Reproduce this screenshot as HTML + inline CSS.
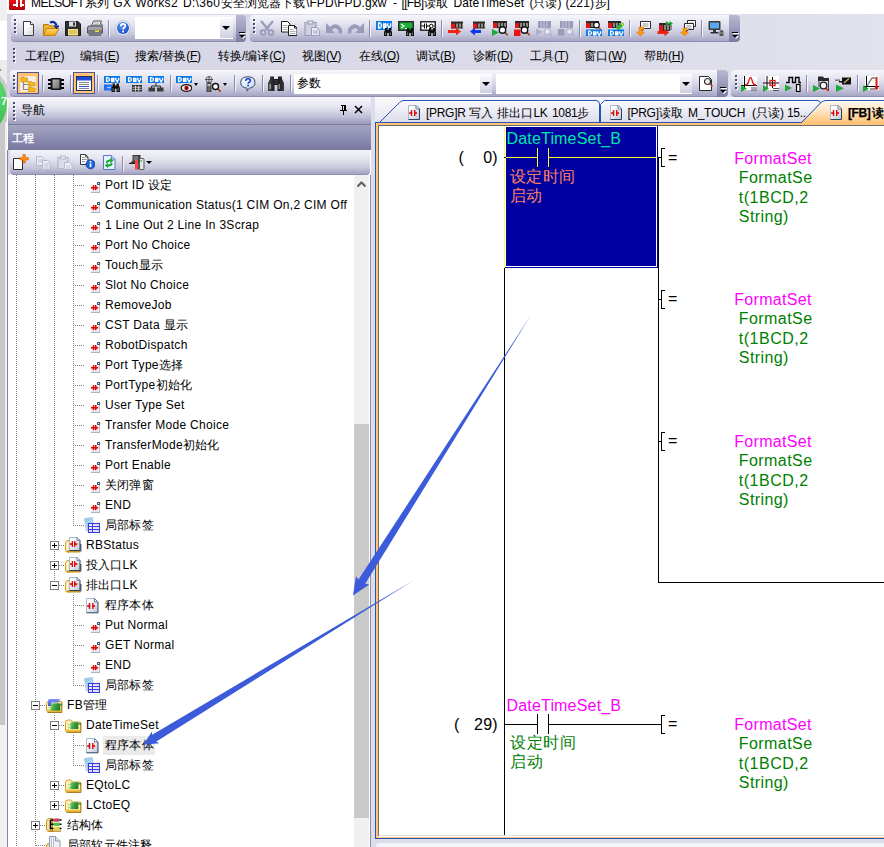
<!DOCTYPE html>
<html><head><meta charset="utf-8"><title>GX Works2</title>
<style>
*{margin:0;padding:0;box-sizing:border-box}
html,body{width:884px;height:847px;overflow:hidden;background:#fff}
body{position:relative;font-family:"Liberation Sans",sans-serif;font-size:12px;color:#000}
.a{position:absolute}
.t{position:absolute;white-space:nowrap;line-height:16px;height:16px}
.tb{position:absolute;background:linear-gradient(#f6f6fb 0%,#e4e4f0 35%,#c9c9de 70%,#a6a6c5 100%);border-bottom:1px solid #8f8fb2}
.cap{position:absolute;background:linear-gradient(#b9b9d3 0%,#9c9cbd 50%,#7c7ca3 100%)}
.sep{position:absolute;width:1px;background:#8a8aad;box-shadow:1px 0 0 #f4f4fa}
.grip{position:absolute;width:2px;height:2px;background:#4a4a78;box-shadow:1px 1px 0 #fff}
.combo{position:absolute;background:#fff}
.dd{position:absolute;background:linear-gradient(#fafafd,#d0d0e2)}
.arr{position:absolute;width:0;height:0;border-left:4px solid transparent;border-right:4px solid transparent;border-top:4px solid #000}
.m{position:absolute;top:48px;line-height:16px;font-size:12px;white-space:nowrap}
.m u{text-decoration:underline}
.vd{position:absolute;width:1px;background:repeating-linear-gradient(to bottom,#808080 0,#808080 1px,transparent 1px,transparent 2px)}
.hd{position:absolute;height:1px;background:repeating-linear-gradient(to right,#808080 0,#808080 1px,transparent 1px,transparent 2px)}
.ex{position:absolute;width:9px;height:9px;border:1px solid #808080;background:#fff}
.ex i{position:absolute;left:1px;top:3px;width:5px;height:1px;background:#000}
.ex b{position:absolute;left:3px;top:1px;width:1px;height:5px;background:#000}
.tr{position:absolute;white-space:nowrap;font-size:12px;line-height:16px;height:16px;letter-spacing:0.3px}
.ld{position:absolute;white-space:nowrap;font-size:16px;line-height:19px}
.bl{position:absolute;background:#000}
.c{display:inline-block;width:1em;text-align:center;letter-spacing:0;overflow:visible}
.ld .c{width:16.5px}
.tr .c{width:12.2px}
</style></head>
<body>
<svg width="0" height="0" style="position:absolute;left:0;top:0"><defs><linearGradient id="pg" x1="0" y1="0" x2="1" y2="1"><stop offset="0.3" stop-color="#fff"/><stop offset="1" stop-color="#d4d4dc"/></linearGradient><linearGradient id="fo" x1="0" y1="0" x2="0" y2="1"><stop offset="0" stop-color="#ffd76a"/><stop offset="1" stop-color="#f2a412"/></linearGradient><radialGradient id="hb" cx="0.4" cy="0.3" r="0.8"><stop offset="0" stop-color="#5a9af8"/><stop offset="1" stop-color="#1444b4"/></radialGradient><linearGradient id="cg" x1="0" y1="0" x2="1" y2="1"><stop offset="0" stop-color="#b8b8b8"/><stop offset="1" stop-color="#707070"/></linearGradient><radialGradient id="hq" cx="0.4" cy="0.3" r="0.9"><stop offset="0" stop-color="#fff"/><stop offset="1" stop-color="#a8c8f0"/></radialGradient><linearGradient id="bg" x1="0" y1="0" x2="1" y2="0"><stop offset="0" stop-color="#4a4a4a"/><stop offset="0.5" stop-color="#111"/><stop offset="1" stop-color="#3a3a3a"/></linearGradient><linearGradient id="lg" x1="0" y1="0" x2="0.6" y2="1"><stop offset="0" stop-color="#7cc3f3"/><stop offset="1" stop-color="#d4e9fa"/></linearGradient><linearGradient id="pg2" x1="0" y1="0" x2="1" y2="1"><stop offset="0.2" stop-color="#fff"/><stop offset="1" stop-color="#bcc5d3"/></linearGradient><linearGradient id="dg" x1="0" y1="0" x2="1" y2="1"><stop offset="0.2" stop-color="#fff"/><stop offset="1" stop-color="#bcc5d3"/></linearGradient><linearGradient id="gb2" x1="0" y1="0" x2="1" y2="0.300"><stop offset="0" stop-color="#86d083"/><stop offset="0.500" stop-color="#3fa43f"/><stop offset="1" stop-color="#2a7f2c"/></linearGradient><linearGradient id="bb2" x1="0" y1="0" x2="0" y2="1"><stop offset="0" stop-color="#8090ff"/><stop offset="1" stop-color="#4456d8"/></linearGradient><linearGradient id="gb" x1="0" y1="0" x2="1" y2="0.300"><stop offset="0" stop-color="#86d083"/><stop offset="0.500" stop-color="#3fa43f"/><stop offset="1" stop-color="#2a7f2c"/></linearGradient><linearGradient id="tbg" x1="0" y1="0" x2="0" y2="1"><stop offset="0" stop-color="#fafaff"/><stop offset="1" stop-color="#dcdcea"/></linearGradient><linearGradient id="tor" x1="0" y1="0" x2="0" y2="1"><stop offset="0" stop-color="#fffaf2"/><stop offset="0.45" stop-color="#ffe6c2"/><stop offset="1" stop-color="#ffc477"/></linearGradient><linearGradient id="tg" x1="0" y1="0" x2="1" y2="1"><stop offset="0.2" stop-color="#fff"/><stop offset="1" stop-color="#bcc5d3"/></linearGradient></defs></svg>

<div class="a" style="left:0;top:0;width:7px;height:847px;overflow:hidden;background:#fff">
<div class="a" style="left:0;top:0;width:8px;height:21px;background:#efefef"></div>
<div class="a" style="left:0;top:60px;width:8px;height:40px;background:#ebebeb"></div>
<div class="a" style="left:0;top:68px;width:0;height:0;border-left:2px solid transparent;border-right:2px solid transparent;border-bottom:3px solid #9a9a9a;margin-left:-2px"></div>
<div class="a" style="left:0;top:100px;width:5px;height:625px;background:#c8c8c8"></div>
<div class="a" style="left:5px;top:100px;width:2px;height:625px;background:#f0f0f0"></div>
<div class="a" style="left:0;top:725px;width:7px;height:122px;background:#f0f0f0"></div>
<div class="a" style="left:-69.5px;top:62.5px;width:80px;height:80px;border-radius:50%;background:#c9c9c9"></div>
<div class="a" style="left:-66px;top:66px;width:73px;height:73px;border-radius:50%;background:radial-gradient(circle at 75% 35%,#62dc74,#34b94a 60%,#2aa63e)"></div>
<div class="t" style="left:1px;top:93px;color:#fff;font-size:11px;font-weight:bold">7</div>
</div>
<div class="a" style="left:7px;top:0;width:877px;height:14px;background:#fff"></div>
<div class="a" style="left:7px;top:14px;width:877px;height:84px;background:linear-gradient(to right,#d4d4e5 0%,#dadae8 50%,#e2e2ed 100%)"></div>
<div class="a" style="left:9px;top:0;width:16px;height:10px;background:linear-gradient(#e8141c,#b40008);border-radius:0 0 1px 1px"></div>
<div class="a" style="left:13px;top:4px;width:3px;height:1.5px;background:#fff"></div><div class="a" style="left:21px;top:4px;width:3px;height:1.5px;background:#fff"></div><div class="a" style="left:16px;top:0;width:1.5px;height:7px;background:#fff"></div><div class="a" style="left:20px;top:0;width:1.5px;height:7px;background:#fff"></div>
<div class="t" style="left:31px;top:-5px;font-size:12px;letter-spacing:-0.5px">MELSOFT</div>
<div class="t" style="left:85px;top:-5px;font-size:12px;letter-spacing:0px"><span class="c">系</span><span class="c">列</span></div>
<div class="t" style="left:113.3px;top:-5px;font-size:12px;letter-spacing:0.4px">GX Works2</div>
<div class="t" style="left:183px;top:-5px;font-size:12px;letter-spacing:0.3px">D:\360</div>
<div class="t" style="left:221px;top:-5px;font-size:12px;letter-spacing:0px"><span class="c">安</span><span class="c">全</span><span class="c">浏</span><span class="c">览</span><span class="c">器</span><span class="c">下</span><span class="c">载</span></div>
<div class="t" style="left:306px;top:-5px;font-size:12px;letter-spacing:0.1px">\FPD\FPD.gxw</div>
<div class="t" style="left:393px;top:-5px;font-size:12px;letter-spacing:0px">-</div>
<div class="t" style="left:401.5px;top:-5px;font-size:12px;letter-spacing:-0.7px">[[FB]</div>
<div class="t" style="left:423.6px;top:-5px;font-size:12px;letter-spacing:0px"><span class="c">读</span><span class="c">取</span></div>
<div class="t" style="left:453.5px;top:-5px;font-size:12px;letter-spacing:0.1px">DateTimeSet</div>
<div class="t" style="left:529.4px;top:-5px;font-size:12px;letter-spacing:0px">(<span class="c">只</span><span class="c">读</span>)</div>
<div class="t" style="left:565.5px;top:-5px;font-size:12px;letter-spacing:0.1px">(221)</div>
<div class="t" style="left:594.5px;top:-5px;font-size:12px;letter-spacing:0px"><span class="c">步</span></div>
<div class="t" style="left:606.5px;top:-5px;font-size:12px;letter-spacing:0px">]</div>
<div class="tb" style="left:11px;top:15px;width:225px;height:27px;border-radius:4px 0 0 4px"></div>
<div class="cap" style="left:236px;top:15px;width:10px;height:27px;border-radius:0 4px 4px 0"></div>
<div class="a" style="left:239px;top:32px;width:6px;height:1px;background:#000;box-shadow:1px 1px 0 #fff"></div>
<div class="a" style="left:240px;top:36px;width:0;height:0;border-left:3px solid transparent;border-right:3px solid transparent;border-top:3px solid #fff"></div>
<div class="a" style="left:239px;top:35px;width:0;height:0;border-left:3px solid transparent;border-right:3px solid transparent;border-top:3px solid #000"></div>
<div class="grip" style="left:14px;top:19px"></div>
<div class="grip" style="left:14px;top:23px"></div>
<div class="grip" style="left:14px;top:27px"></div>
<div class="grip" style="left:14px;top:31px"></div>
<div class="tb" style="left:250px;top:15px;width:479px;height:27px;border-radius:4px 0 0 4px"></div>
<div class="cap" style="left:729px;top:15px;width:11px;height:27px;border-radius:0 4px 4px 0"></div>
<div class="a" style="left:732px;top:32px;width:6px;height:1px;background:#000;box-shadow:1px 1px 0 #fff"></div>
<div class="a" style="left:733px;top:36px;width:0;height:0;border-left:3px solid transparent;border-right:3px solid transparent;border-top:3px solid #fff"></div>
<div class="a" style="left:732px;top:35px;width:0;height:0;border-left:3px solid transparent;border-right:3px solid transparent;border-top:3px solid #000"></div>
<div class="grip" style="left:253px;top:19px"></div>
<div class="grip" style="left:253px;top:23px"></div>
<div class="grip" style="left:253px;top:27px"></div>
<div class="grip" style="left:253px;top:31px"></div>
<div class="grip" style="left:13px;top:48px"></div>
<div class="grip" style="left:13px;top:52px"></div>
<div class="grip" style="left:13px;top:56px"></div>
<div class="grip" style="left:13px;top:60px"></div>
<div class="tb" style="left:10px;top:70px;width:707px;height:27px;border-radius:4px 0 0 4px"></div>
<div class="cap" style="left:717px;top:70px;width:11px;height:27px;border-radius:0 4px 4px 0"></div>
<div class="a" style="left:720px;top:87px;width:6px;height:1px;background:#000;box-shadow:1px 1px 0 #fff"></div>
<div class="a" style="left:721px;top:91px;width:0;height:0;border-left:3px solid transparent;border-right:3px solid transparent;border-top:3px solid #fff"></div>
<div class="a" style="left:720px;top:90px;width:0;height:0;border-left:3px solid transparent;border-right:3px solid transparent;border-top:3px solid #000"></div>
<div class="grip" style="left:13px;top:75px"></div>
<div class="grip" style="left:13px;top:79px"></div>
<div class="grip" style="left:13px;top:83px"></div>
<div class="grip" style="left:13px;top:87px"></div>
<div class="tb" style="left:731px;top:70px;width:160px;height:27px;border-radius:4px 0 0 4px"></div>
<div class="grip" style="left:735px;top:75px"></div>
<div class="grip" style="left:735px;top:79px"></div>
<div class="grip" style="left:735px;top:83px"></div>
<div class="grip" style="left:735px;top:87px"></div>
<div class="combo" style="left:135px;top:17px;width:98px;height:22px"></div>
<div class="dd" style="left:220px;top:18px;width:13px;height:20px"></div>
<div class="arr" style="left:222px;top:26px"></div>
<div class="combo" style="left:294px;top:74px;width:198px;height:20px"></div>
<div class="dd" style="left:480px;top:75px;width:12px;height:18px"></div>
<div class="arr" style="left:482px;top:82px"></div>
<div class="combo" style="left:496px;top:74px;width:196px;height:20px"></div>
<div class="dd" style="left:680px;top:75px;width:12px;height:18px"></div>
<div class="arr" style="left:682px;top:82px"></div>
<div class="t" style="left:297px;top:75px;font-size:12px"><span class="c">参</span><span class="c">数</span></div>
<div class="sep" style="left:108px;top:20px;height:17px"></div>
<div class="sep" style="left:369px;top:20px;height:17px"></div>
<div class="sep" style="left:441px;top:20px;height:17px"></div>
<div class="sep" style="left:579px;top:20px;height:17px"></div>
<div class="sep" style="left:629px;top:20px;height:17px"></div>
<div class="sep" style="left:701px;top:20px;height:17px"></div>
<div class="sep" style="left:42px;top:75px;height:17px"></div>
<div class="sep" style="left:70px;top:75px;height:17px"></div>
<div class="sep" style="left:97px;top:75px;height:17px"></div>
<div class="sep" style="left:170px;top:75px;height:17px"></div>
<div class="sep" style="left:234px;top:75px;height:17px"></div>
<div class="sep" style="left:262px;top:75px;height:17px"></div>
<div class="sep" style="left:290px;top:75px;height:17px"></div>
<div class="sep" style="left:806px;top:75px;height:17px"></div>
<div class="sep" style="left:857px;top:75px;height:17px"></div>
<div class="m" style="left:25px"><span class="c">工</span><span class="c">程</span><span style="letter-spacing:-0.3px">(<u>P</u>)</span></div>
<div class="m" style="left:80px"><span class="c">编</span><span class="c">辑</span><span style="letter-spacing:-0.3px">(<u>E</u>)</span></div>
<div class="m" style="left:135px"><span class="c">搜</span><span class="c">索</span>/<span class="c">替</span><span class="c">换</span><span style="letter-spacing:-0.3px">(<u>F</u>)</span></div>
<div class="m" style="left:218px"><span class="c">转</span><span class="c">换</span>/<span class="c">编</span><span class="c">译</span><span style="letter-spacing:-0.3px">(<u>C</u>)</span></div>
<div class="m" style="left:302px"><span class="c">视</span><span class="c">图</span><span style="letter-spacing:-0.3px">(<u>V</u>)</span></div>
<div class="m" style="left:359px"><span class="c">在</span><span class="c">线</span><span style="letter-spacing:-0.3px">(<u>O</u>)</span></div>
<div class="m" style="left:416px"><span class="c">调</span><span class="c">试</span><span style="letter-spacing:-0.3px">(<u>B</u>)</span></div>
<div class="m" style="left:473px"><span class="c">诊</span><span class="c">断</span><span style="letter-spacing:-0.3px">(<u>D</u>)</span></div>
<div class="m" style="left:530px"><span class="c">工</span><span class="c">具</span><span style="letter-spacing:-0.3px">(<u>T</u>)</span></div>
<div class="m" style="left:584px"><span class="c">窗</span><span class="c">口</span><span style="letter-spacing:-0.3px">(<u>W</u>)</span></div>
<div class="m" style="left:644px"><span class="c">帮</span><span class="c">助</span><span style="letter-spacing:-0.3px">(<u>H</u>)</span></div>
<svg class="a" style="left:21px;top:20px" width="16" height="16" viewBox="0 0 16 16"><path d="M2.5 1.5h7l3 3v11h-10z" fill="url(#pg)" stroke="#3c3c3c" stroke-width="1"/><path d="M9.5 1.5v3h3" fill="#fff" stroke="#3c3c3c" stroke-width="1"/></svg>
<svg class="a" style="left:43px;top:20px" width="16" height="16" viewBox="0 0 16 16"><path d="M0.5 4.5h5l1.5 1.5h5v9.5h-11.5z" fill="#f0b428" stroke="#b87a0a" stroke-width="1"/><path d="M0.5 15.5l3-7h12.5l-4 7z" fill="url(#fo)" stroke="#c08410" stroke-width="1"/><path d="M7 2.5q5-2 6.5 3" fill="none" stroke="#0a2a9c" stroke-width="2.2"/><path d="M10.5 5.5h6l-3 3.8z" fill="#0a2a9c"/></svg>
<svg class="a" style="left:65px;top:20px" width="16" height="16" viewBox="0 0 16 16"><path d="M0.5 1.5h12.5l2.5 2.5v11.5h-15z" fill="#2e2e2e" stroke="#1a1a1a" stroke-width="1"/><rect x="4" y="1.5" width="7" height="5" fill="#dcdce4"/><rect x="8" y="2.5" width="2" height="3" fill="#2e2e2e"/><rect x="3" y="9" width="10" height="6.5" fill="#f6e08a"/><path d="M4 11h8M4 13h8" stroke="#c8a840" stroke-width="1"/></svg>
<svg class="a" style="left:87px;top:20px" width="16" height="16" viewBox="0 0 16 16"><path d="M4.5 6l2-5h8l-2 5z" fill="#f4f4f6" stroke="#555" stroke-width="1"/><path d="M7 3h5M6.5 4.5h5" stroke="#999" stroke-width="0.8"/><path d="M0.5 8q0-2 2-2h11q2 0 2 2v5h-15z" fill="#a2a2a8" stroke="#505058" stroke-width="1"/><rect x="1" y="10" width="14" height="4.5" fill="#787880"/><rect x="8" y="10.5" width="4" height="1.5" fill="#f0e020"/><path d="M2 14.5h12v1.2h-12z" fill="#55555c"/><path d="M14 4l2 2v5" stroke="#6a6a72" stroke-width="1.2" fill="none"/></svg>
<svg class="a" style="left:115px;top:20px" width="16" height="16" viewBox="0 0 16 16"><circle cx="8" cy="8" r="7.3" fill="#eef2fb" stroke="#b8c0d8" stroke-width="0.8"/><circle cx="8" cy="8" r="6" fill="url(#hb)"/><path d="M5.8 6.2q0-2.4 2.3-2.4q2.2 0 2.2 2q0 1.2-1.2 1.9q-1 0.6-1 1.8" fill="none" stroke="#fff" stroke-width="1.7"/><rect x="7.2" y="10.6" width="1.8" height="1.8" fill="#fff"/></svg>
<svg class="a" style="left:259px;top:20px" width="16" height="16" viewBox="0 0 16 16"><path d="M2 1l7.5 9M14 1l-7.5 9" stroke="#9a9aba" stroke-width="2.2" fill="none"/><circle cx="4" cy="12.5" r="2.4" fill="none" stroke="#9a9aba" stroke-width="1.8"/><circle cx="12" cy="12.5" r="2.4" fill="none" stroke="#9a9aba" stroke-width="1.8"/></svg>
<svg class="a" style="left:281px;top:20px" width="16" height="16" viewBox="0 0 16 16"><path d="M0.5 1.5h6l2.5 2.5v8h-8.500z" fill="#fff" stroke="#1c1c1c" stroke-width="1"/><path d="M2 5.500h4.500M2 7.500h4.500M2 9.500h4.500" stroke="#8a8a8a" stroke-width="0.700"/><path d="M7.500 5.500h6l2.500 2.500v7.500h-8.500z" fill="#fff" stroke="#1c1c1c" stroke-width="1"/><path d="M13.500 5.500v2.500h2.500" fill="none" stroke="#1c1c1c"/><path d="M9 9.500h3.500M9 11.500h5.500M9 13.500h5.500" stroke="#8a8a8a" stroke-width="0.700"/></svg>
<svg class="a" style="left:304px;top:20px" width="16" height="16" viewBox="0 0 16 16"><path d="M1 2.500h11v13h-11z" fill="#cfcfe2" stroke="#9a9aba" stroke-width="1.2"/><rect x="4" y="1" width="5" height="3" fill="#e4e4f0" stroke="#9a9aba" stroke-width="1"/><path d="M7.500 7.500h5l3 3v5h-8z" fill="#ececf6" stroke="#9a9aba" stroke-width="1"/><path d="M9 11h5M9 13h5" stroke="#9a9aba" stroke-width="0.9"/></svg>
<svg class="a" style="left:326px;top:20px" width="16" height="16" viewBox="0 0 16 16"><path d="M0 3v10h9l-3-3q3-3.500 6 0q1 1.500 0.500 3.500h3.500q1-4-2-7q-5-4.500-10 0.500z" fill="#9a9aba"/></svg>
<svg class="a" style="left:348px;top:20px" width="16" height="16" viewBox="0 0 16 16"><path d="M16 3v10h-9l3-3q-3-3.500-6 0q-1 1.500-0.500 3.500h-3.500q-1-4 2-7q5-4.500 10 0.500z" fill="#9a9aba"/></svg>
<svg class="a" style="left:376px;top:20px" width="16" height="16" viewBox="0 0 16 16"><rect x="0" y="1" width="16" height="9" fill="#0a78e6"/><g transform="translate(0 1) scale(1 1.286)"><path d="M2.6 1v5M2 1.6h2.6M2 5.400h2.6M5.200 2v3" stroke="#fff" stroke-width="1.35" fill="none"/><path d="M7.600 2.200v3.400M7 2.400h3.400M7 5.400h3.600M10 2.400v1.800M7 4h3.400" stroke="#fff" stroke-width="1.35" fill="none"/><path d="M11.800 1.800v2.400M14.600 1.800v2.400M12.400 4l0.800 2l0.800-2" stroke="#fff" stroke-width="1.35" fill="none"/></g><g transform="translate(8 8) scale(1.0)"><path d="M1 0h2.200v2h1.600V0h2.200v2l1 2v4H4.800V5H3.200v3H0V4l1-2z" fill="#111"/><rect x="1" y="4.500" width="1" height="2.500" fill="#777"/><rect x="5.800" y="4.500" width="1" height="2.500" fill="#777"/></g></svg>
<svg class="a" style="left:398px;top:20px" width="16" height="16" viewBox="0 0 16 16"><rect x="0" y="1" width="16" height="10" fill="#2a2a2a"/><rect x="1.500" y="2.500" width="13" height="7" fill="#18b038"/><path d="M3 4l3 2l-3 2M7 8.500h4" stroke="#fff" stroke-width="1.200" fill="none"/><g transform="translate(8 8) scale(1.0)"><path d="M1 0h2.200v2h1.600V0h2.200v2l1 2v4H4.800V5H3.200v3H0V4l1-2z" fill="#111"/><rect x="1" y="4.500" width="1" height="2.500" fill="#777"/><rect x="5.800" y="4.500" width="1" height="2.500" fill="#777"/></g></svg>
<svg class="a" style="left:420px;top:20px" width="16" height="16" viewBox="0 0 16 16"><rect x="0" y="1" width="16" height="10" fill="#2a2a2a"/><rect x="1.500" y="2.500" width="13" height="7" fill="#fff"/><path d="M1.500 6h3M4.500 3.500v5M6.500 3.500v5M6.500 6h3M14.500 6h-1" stroke="#000" stroke-width="1" fill="none"/><circle cx="11.300" cy="6" r="1.800" fill="none" stroke="#000"/><g transform="translate(8 8) scale(1.0)"><path d="M1 0h2.200v2h1.600V0h2.200v2l1 2v4H4.800V5H3.200v3H0V4l1-2z" fill="#111"/><rect x="1" y="4.500" width="1" height="2.500" fill="#777"/><rect x="5.800" y="4.500" width="1" height="2.500" fill="#777"/></g></svg>
<svg class="a" style="left:447px;top:20px" width="16" height="16" viewBox="0 0 16 16"><rect x="4" y="1.5" width="13" height="7" fill="#2a2a2a"/><rect x="4" y="3.5" width="4" height="5" fill="#e01818"/><rect x="9" y="3.5" width="2" height="4" fill="#8a8a80"/><rect x="12" y="3.5" width="2" height="4" fill="#8a8a80"/><rect x="15" y="3.5" width="2" height="4" fill="#8a8a80"/><path d="M1 10h8v-2.500l5 4l-5 4v-2.500h-8z" fill="#f02410"/></svg>
<svg class="a" style="left:469px;top:20px" width="16" height="16" viewBox="0 0 16 16"><rect x="4" y="1.5" width="13" height="7" fill="#2a2a2a"/><rect x="4" y="3.5" width="4" height="5" fill="#e01818"/><rect x="9" y="3.5" width="2" height="4" fill="#8a8a80"/><rect x="12" y="3.5" width="2" height="4" fill="#8a8a80"/><rect x="15" y="3.5" width="2" height="4" fill="#8a8a80"/><path d="M12 10h-6v-2.500l-5 4l5 4v-2.500h6z" fill="#1038f0"/></svg>
<svg class="a" style="left:492px;top:20px" width="16" height="16" viewBox="0 0 16 16"><rect x="1" y="1" width="14" height="7" fill="#2a2a2a"/><rect x="1" y="3" width="4" height="5" fill="#e01818"/><rect x="6" y="3" width="2" height="4" fill="#8a8a80"/><rect x="9" y="3" width="2" height="4" fill="#8a8a80"/><rect x="12" y="3" width="2" height="4" fill="#8a8a80"/><path d="M12.7 12.2l3.2 3.2" stroke="#a0501c" stroke-width="1.8"/><circle cx="10.5" cy="10" r="3.2" fill="#fff" stroke="#111" stroke-width="1.4"/><path d="M0 9l7 3.5l-7 3.5z" fill="#1ea838"/></svg>
<svg class="a" style="left:514px;top:20px" width="16" height="16" viewBox="0 0 16 16"><rect x="1" y="1" width="14" height="7" fill="#2a2a2a"/><rect x="1" y="3" width="4" height="5" fill="#e01818"/><rect x="6" y="3" width="2" height="4" fill="#8a8a80"/><rect x="9" y="3" width="2" height="4" fill="#8a8a80"/><rect x="12" y="3" width="2" height="4" fill="#8a8a80"/><path d="M12.7 12.2l3.2 3.2" stroke="#a0501c" stroke-width="1.8"/><circle cx="10.5" cy="10" r="3.2" fill="#fff" stroke="#111" stroke-width="1.4"/><rect x="0" y="9.500" width="6.500" height="6.500" fill="#f01010"/></svg>
<svg class="a" style="left:536px;top:20px" width="16" height="16" viewBox="0 0 16 16"><rect x="2" y="1" width="13" height="7" fill="#9a9aba"/><path d="M5 1v7M8 1v7M11 1v7" stroke="#c4c4da" stroke-width="1"/><path d="M0 8.500l7 3.500l-7 3.500z" fill="#b0b0ca"/><circle cx="11.500" cy="11.500" r="3" fill="#e8e8f2" stroke="#b8b8d0" stroke-width="1.300"/><path d="M13.800 13.800l2 2" stroke="#b0b0ca" stroke-width="1.500"/></svg>
<svg class="a" style="left:558px;top:20px" width="16" height="16" viewBox="0 0 16 16"><rect x="2" y="1" width="13" height="7" fill="#9a9aba"/><path d="M5 1v7M8 1v7M11 1v7" stroke="#c4c4da" stroke-width="1"/><rect x="0" y="9" width="6.500" height="6.500" fill="#9a9aba"/><circle cx="11.500" cy="11.500" r="3" fill="#e8e8f2" stroke="#b8b8d0" stroke-width="1.300"/><path d="M13.800 13.800l2 2" stroke="#b0b0ca" stroke-width="1.500"/></svg>
<svg class="a" style="left:586px;top:20px" width="16" height="16" viewBox="0 0 16 16"><rect x="0" y="1" width="13" height="7" fill="#2a2a2a"/><rect x="0" y="3" width="4" height="5" fill="#e01818"/><rect x="5" y="3" width="2" height="4" fill="#8a8a80"/><rect x="8" y="3" width="2" height="4" fill="#8a8a80"/><rect x="11" y="3" width="2" height="4" fill="#8a8a80"/><path d="M12.500 7.500l2.500 2.500" stroke="#a0501c" stroke-width="1.600"/><circle cx="10.500" cy="5" r="2.800" fill="#fff" stroke="#111" stroke-width="1.200"/><rect x="0" y="9.5" width="16" height="7" fill="#0a78e6"/><g transform="translate(0 9.5) scale(1 1.000)"><path d="M2.6 1v5M2 1.6h2.6M2 5.400h2.6M5.200 2v3" stroke="#fff" stroke-width="1.35" fill="none"/><path d="M7.600 2.200v3.400M7 2.400h3.400M7 5.400h3.600M10 2.400v1.800M7 4h3.400" stroke="#fff" stroke-width="1.35" fill="none"/><path d="M11.800 1.800v2.400M14.600 1.800v2.400M12.400 4l0.800 2l0.800-2" stroke="#fff" stroke-width="1.35" fill="none"/></g></svg>
<svg class="a" style="left:608px;top:20px" width="16" height="16" viewBox="0 0 16 16"><rect x="0" y="1" width="13" height="7" fill="#2a2a2a"/><rect x="0" y="3" width="4" height="5" fill="#e01818"/><rect x="5" y="3" width="2" height="4" fill="#8a8a80"/><rect x="8" y="3" width="2" height="4" fill="#8a8a80"/><rect x="11" y="3" width="2" height="4" fill="#8a8a80"/><path d="M8 8l6-6l2.500 2.500l-6 6z" fill="#2cb83c"/><path d="M8 8l-1 3.500l3.500-1z" fill="#e8d060"/><path d="M13 3l2.500 2.500" stroke="#e8e040" stroke-width="1.200"/><rect x="0" y="9.5" width="16" height="7" fill="#0a78e6"/><g transform="translate(0 9.5) scale(1 1.000)"><path d="M2.6 1v5M2 1.6h2.6M2 5.400h2.6M5.200 2v3" stroke="#fff" stroke-width="1.35" fill="none"/><path d="M7.600 2.200v3.400M7 2.400h3.400M7 5.400h3.600M10 2.400v1.800M7 4h3.400" stroke="#fff" stroke-width="1.35" fill="none"/><path d="M11.800 1.800v2.400M14.600 1.800v2.400M12.400 4l0.800 2l0.800-2" stroke="#fff" stroke-width="1.35" fill="none"/></g></svg>
<svg class="a" style="left:635px;top:20px" width="16" height="16" viewBox="0 0 16 16"><path d="M5.5 1.5h10v7h-6l-2.500 2.500v-2.500h-1.500z" fill="#fff" stroke="#2a2a2a" stroke-width="1"/><path d="M7.5 4.0h6M7.5 6.0h6" stroke="#888" stroke-width="0.900"/><path d="M5 7h3.500v2.500h-1.500v2.500h2.500l-4 4l-4-4h2.500v-5z" fill="#ff9a10" stroke="#e06c00" stroke-width="0.500"/></svg>
<svg class="a" style="left:657px;top:20px" width="16" height="16" viewBox="0 0 16 16"><rect x="2" y="3" width="11" height="8" fill="#2a2a2a"/><rect x="2" y="5" width="4" height="6" fill="#e01818"/><rect x="7" y="5" width="2" height="5" fill="#8a8a80"/><rect x="10" y="5" width="2" height="5" fill="#8a8a80"/><rect x="13" y="5" width="2" height="5" fill="#8a8a80"/><path d="M9 1l3.500 2.500l-3.500 2.500zM12.500 1l3.500 2.500l-3.500 2.500z" fill="#18a830"/><path d="M0.500 11h7v-2.300l4.500 3.800l-4.500 3.800v-2.300h-7z" fill="#f02410"/></svg>
<svg class="a" style="left:680px;top:20px" width="16" height="16" viewBox="0 0 16 16"><path d="M7.5 0.5h8v6h-4l-2.500 2.500v-2.500h-1.500z" fill="#fff" stroke="#2a2a2a" stroke-width="1"/><path d="M9.5 3.0h4M9.5 5.0h4" stroke="#888" stroke-width="0.900"/><path d="M4.5 3.5h9v6h-5l-2.500 2.500v-2.500h-1.500z" fill="#fff" stroke="#2a2a2a" stroke-width="1"/><path d="M6.5 6.0h5M6.5 8.0h5" stroke="#888" stroke-width="0.900"/><path d="M4 8h3v2h-1v2h2.500l-4 4l-4-4h2.500v-4z" fill="#ff9a10" stroke="#e06c00" stroke-width="0.500"/></svg>
<svg class="a" style="left:708px;top:20px" width="16" height="16" viewBox="0 0 16 16"><rect x="0.500" y="1" width="12" height="9" rx="1" fill="#3a3a3a"/><rect x="2" y="2.500" width="9" height="6" fill="#5aa8f4"/><rect x="5" y="10" width="3" height="2" fill="#3a3a3a"/><rect x="2.500" y="12" width="8" height="1.500" fill="#2a2a2a"/><path d="M11.500 12q0-2 2-2q2 0 2 2v4h-4z" fill="#555"/><rect x="11.500" y="12.500" width="4" height="1" fill="#999"/></svg>
<div class="a" style="left:17px;top:72px;width:22px;height:22px;background:#ffc373;border:1px solid #54548c"></div>
<div class="a" style="left:73px;top:72px;width:22px;height:22px;background:#ffc373;border:1px solid #54548c"></div>
<svg class="a" style="left:20px;top:76px" width="16" height="16" viewBox="0 0 16 16"><rect x="0" y="0" width="16" height="16" fill="#f4f0ea"/><rect x="0" y="0" width="16" height="16" fill="none" stroke="#ffd9a4" stroke-width="1"/><path d="M3.500 5v8.500h5M3.500 8.500h5" stroke="#8a8a8a" stroke-width="1.200" fill="none"/><path d="M1 1h3l1 1h2.500v4h-6.500z" fill="#f4b81c" stroke="#c88a08" stroke-width="0.600"/><path d="M8.500 5.500h3l1 1h2.500v3.500h-6.500z" fill="#f4b81c" stroke="#c88a08" stroke-width="0.600"/><path d="M8.500 11h3l1 1h2.500v3.500h-6.500z" fill="#f4b81c" stroke="#c88a08" stroke-width="0.600"/></svg>
<svg class="a" style="left:48px;top:76px" width="16" height="16" viewBox="0 0 16 16"><path d="M0 4h3M0 8h3M0 12h3M13 4h3M13 8h3M13 12h3" stroke="#000" stroke-width="2"/><rect x="2.500" y="2" width="11" height="12" rx="1.500" fill="#111"/><rect x="4.500" y="3.500" width="7" height="9" fill="url(#cg)"/></svg>
<svg class="a" style="left:76px;top:76px" width="16" height="16" viewBox="0 0 16 16"><rect x="0.500" y="0.500" width="15" height="14" fill="#fff" stroke="#1c2c6c" stroke-width="1"/><rect x="1" y="1" width="14" height="3.500" fill="#1f4fd0"/><path d="M3 6.500h10M3 8.500h10M3 12.500h10" stroke="#8a8a8a" stroke-width="1"/><path d="M3 10.500h10" stroke="#2a5ae0" stroke-width="1"/></svg>
<svg class="a" style="left:104px;top:76px" width="16" height="16" viewBox="0 0 16 16"><rect x="0" y="0" width="16" height="7" fill="#0a78e6"/><g transform="translate(0 0) scale(1 1.000)"><path d="M2.6 1v5M2 1.6h2.6M2 5.400h2.6M5.200 2v3" stroke="#fff" stroke-width="1.35" fill="none"/><path d="M7.600 2.200v3.400M7 2.400h3.400M7 5.400h3.600M10 2.400v1.800M7 4h3.400" stroke="#fff" stroke-width="1.35" fill="none"/><path d="M11.800 1.800v2.400M14.600 1.800v2.400M12.400 4l0.800 2l0.800-2" stroke="#fff" stroke-width="1.35" fill="none"/></g><rect x="0" y="8.500" width="8" height="6" fill="#1f6cf0"/><path d="M3 11.500h4" stroke="#9cc4ff" stroke-width="1.500"/><g transform="translate(7.5 7.5) scale(1.05)"><path d="M1 0h2.200v2h1.600V0h2.200v2l1 2v4H4.800V5H3.200v3H0V4l1-2z" fill="#111"/><rect x="1" y="4.500" width="1" height="2.500" fill="#777"/><rect x="5.800" y="4.500" width="1" height="2.500" fill="#777"/></g></svg>
<svg class="a" style="left:126px;top:76px" width="16" height="16" viewBox="0 0 16 16"><rect x="0" y="0" width="16" height="7" fill="#0a78e6"/><g transform="translate(0 0) scale(1 1.000)"><path d="M2.6 1v5M2 1.6h2.6M2 5.400h2.6M5.200 2v3" stroke="#fff" stroke-width="1.35" fill="none"/><path d="M7.600 2.200v3.400M7 2.400h3.400M7 5.400h3.600M10 2.400v1.800M7 4h3.400" stroke="#fff" stroke-width="1.35" fill="none"/><path d="M11.800 1.800v2.400M14.600 1.800v2.400M12.400 4l0.800 2l0.800-2" stroke="#fff" stroke-width="1.35" fill="none"/></g><rect x="6" y="9" width="10" height="6.500" fill="#2a2a2a"/><path d="M6.500 11.200h9M6.500 13.300h9M9.500 9.500v6M12.700 9.500v6" stroke="#d8d8d8" stroke-width="0.900"/></svg>
<svg class="a" style="left:148px;top:76px" width="16" height="16" viewBox="0 0 16 16"><rect x="0" y="0" width="16" height="7" fill="#0a78e6"/><g transform="translate(0 0) scale(1 1.000)"><path d="M2.6 1v5M2 1.6h2.6M2 5.400h2.6M5.200 2v3" stroke="#fff" stroke-width="1.35" fill="none"/><path d="M7.600 2.200v3.400M7 2.400h3.400M7 5.400h3.600M10 2.400v1.800M7 4h3.400" stroke="#fff" stroke-width="1.35" fill="none"/><path d="M11.800 1.800v2.400M14.600 1.800v2.400M12.400 4l0.800 2l0.800-2" stroke="#fff" stroke-width="1.35" fill="none"/></g><path d="M8 7v3M3.500 10h9M3.500 10v2M12.500 10v2" stroke="#2a2a2a" stroke-width="1" fill="none"/><rect x="0.500" y="11.500" width="6.500" height="4" fill="#3a3a3a"/><rect x="9" y="11.500" width="6.500" height="4" fill="#3a3a3a"/></svg>
<svg class="a" style="left:176px;top:76px" width="16" height="16" viewBox="0 0 16 16"><rect x="0" y="0" width="16" height="7" fill="#0a78e6"/><g transform="translate(0 0) scale(1 1.000)"><path d="M2.6 1v5M2 1.6h2.6M2 5.400h2.6M5.200 2v3" stroke="#fff" stroke-width="1.35" fill="none"/><path d="M7.600 2.200v3.400M7 2.400h3.400M7 5.400h3.600M10 2.400v1.800M7 4h3.400" stroke="#fff" stroke-width="1.35" fill="none"/><path d="M11.800 1.800v2.400M14.600 1.800v2.400M12.400 4l0.800 2l0.800-2" stroke="#fff" stroke-width="1.35" fill="none"/></g><ellipse cx="10.500" cy="12" rx="5.300" ry="3.300" fill="#f4ece8" stroke="#2a1414" stroke-width="1.300"/><circle cx="10.500" cy="12" r="2.200" fill="#b01818"/><circle cx="10.500" cy="12" r="1" fill="#200"/></svg>
<div class="arr" style="left:194px;top:83px;border-left-width:2.500px;border-right-width:2.500px;border-top-width:3px"></div>
<svg class="a" style="left:205px;top:76px" width="16" height="16" viewBox="0 0 16 16"><circle cx="4" cy="3.500" r="3" fill="none" stroke="#555" stroke-width="0.900"/><path d="M0 3.500h8M4 0v7" stroke="#444" stroke-width="0.900"/><rect x="2" y="7" width="4" height="9" fill="#6a6a6a" stroke="#2a2a2a" stroke-width="0.800"/><rect x="2.500" y="8" width="3" height="2" fill="#bbb"/><path d="M12.7 12.7l3.2 3.2" stroke="#b0401c" stroke-width="1.8"/><circle cx="10.5" cy="10.5" r="3" fill="#fff" stroke="#111" stroke-width="1.4"/></svg>
<div class="arr" style="left:223px;top:83px;border-left-width:2.500px;border-right-width:2.500px;border-top-width:3px"></div>
<svg class="a" style="left:240px;top:76px" width="16" height="16" viewBox="0 0 16 16"><path d="M8 0.800q7 0 7 5.700q0 5-5.500 5.600l-2.500 3v-3q-6.300-0.500-6.300-5.600q0-5.700 7.300-5.700z" fill="url(#hq)" stroke="#3a4a6a" stroke-width="1"/><path d="M5.800 5q0-2.200 2.300-2.200q2.200 0 2.200 1.800q0 1.100-1.200 1.700q-1 0.500-1 1.500" fill="none" stroke="#1c3cc0" stroke-width="1.600"/><rect x="7.200" y="8.800" width="1.800" height="1.600" fill="#1c3cc0"/></svg>
<svg class="a" style="left:268px;top:76px" width="16" height="16" viewBox="0 0 16 16"><path d="M2 0.500h4v2.500h4v-2.500h4v2.500l2 4v8h-6.500v-6h-3v6h-6.500v-8l2-4z" fill="url(#bg)"/><rect x="1.500" y="8" width="1.500" height="5" fill="#999"/><rect x="10.500" y="8" width="1.500" height="5" fill="#888"/><rect x="6.500" y="4" width="3" height="4" fill="#333"/></svg>
<svg class="a" style="left:699px;top:76px" width="14" height="16" viewBox="0 0 14 16"><path d="M0.500 0.500h9l3 3v11h-12z" fill="#fff" stroke="#2a2a2a" stroke-width="1"/><circle cx="8.500" cy="5.500" r="3" fill="#f4f4f4" stroke="#2a2a2a" stroke-width="1.200"/><path d="M10.800 7.800l2.700 2.700" stroke="#a0501c" stroke-width="1.600"/></svg>
<svg class="a" style="left:741px;top:76px" width="16" height="16" viewBox="0 0 16 16"><rect x="2" y="0" width="14" height="14" fill="#fff"/><path d="M3.500 0v12M0 9.500h16" stroke="#000" stroke-width="1" fill="none"/><path d="M4 9q3 0 4-5q1.500-5 3 0q1 5 4 5" fill="none" stroke="#e01818" stroke-width="1.300"/><path d="M0 9l6 3.5l-6 3.5z" fill="#1ea838"/><path d="M10 12h6M10 14h6" stroke="#555" stroke-width="1.200"/></svg>
<svg class="a" style="left:763px;top:76px" width="16" height="16" viewBox="0 0 16 16"><rect x="2" y="0" width="14" height="14" fill="#fff"/><path d="M4 0v12M0 7h16M9.500 1v11" stroke="#000" stroke-width="1" fill="none"/><rect x="7" y="4.500" width="5" height="5" fill="none" stroke="#e01818" stroke-width="1.300"/><path d="M0 9l6 3.5l-6 3.5z" fill="#1ea838"/><path d="M10 12.500h6M10 14.500h6" stroke="#555" stroke-width="1.200"/></svg>
<svg class="a" style="left:785px;top:76px" width="16" height="16" viewBox="0 0 16 16"><path d="M1 6.500h3v-5h3.500v5h3v-5h3.500v5h2" fill="none" stroke="#000" stroke-width="1.400"/><path d="M0 8.5l7 3.5l-7 3.5z" fill="#1ea838"/><rect x="11.500" y="8.500" width="3.500" height="7" fill="#fff" stroke="#000" stroke-width="1.200"/></svg>
<svg class="a" style="left:813px;top:76px" width="16" height="16" viewBox="0 0 16 16"><path d="M5 0.500h5l1 1.500h5v3h-11z" fill="#2a2a2a"/><path d="M6 5v6M15.500 5v9" stroke="#444" stroke-width="1"/><path d="M13 12.500l2.500 2.500" stroke="#e01818" stroke-width="1.600"/><circle cx="10.500" cy="9.500" r="3.300" fill="#f4f4f4" stroke="#222" stroke-width="1.300"/><path d="M0 9l7 3.5l-7 3.5z" fill="#1ea838"/></svg>
<svg class="a" style="left:835px;top:76px" width="16" height="16" viewBox="0 0 16 16"><path d="M4 5h3v-3.500h9v7h-9v-2h-3z" fill="#111"/><path d="M9 7l5-4.500" stroke="#b8a860" stroke-width="1.500"/><rect x="0" y="3.500" width="5" height="1.300" fill="#666"/><path d="M1 8.5l8 3.75l-8 3.75z" fill="#1ea838"/></svg>
<svg class="a" style="left:863px;top:76px" width="16" height="16" viewBox="0 0 16 16"><rect x="2" y="0" width="14" height="14" fill="#fff"/><path d="M3.500 0v13M0 10.500h16" stroke="#000" stroke-width="1" fill="none"/><path d="M4 10l5-8h3" fill="none" stroke="#777" stroke-width="1.300"/><rect x="12.500" y="1" width="2" height="10" fill="#e01818"/><circle cx="13.500" cy="12" r="1.800" fill="#e01818"/><path d="M0 9.5l6 3.25l-6 3.25z" fill="#1ea838"/><path d="M7 13h5" stroke="#555" stroke-width="1.200"/></svg>
<div class="a" style="left:8px;top:97px;width:363px;height:27px;background:linear-gradient(#f6f6fb 0%,#e6e6f1 35%,#c4c4da 70%,#9a9abb 100%);border-radius:4px 0 0 0"></div>
<div class="grip" style="left:13px;top:102px"></div>
<div class="grip" style="left:13px;top:106px"></div>
<div class="grip" style="left:13px;top:110px"></div>
<div class="grip" style="left:13px;top:114px"></div>
<div class="grip" style="left:13px;top:118px"></div>
<div class="t" style="left:21px;top:102px;font-size:12px"><span class="c">导</span><span class="c">航</span></div>
<svg class="a" style="left:339px;top:104px" width="10" height="11" viewBox="0 0 10 11"><path d="M2 1h5M3 1v5M6 1v5M5 1v5M1 6h7M4.5 6v4.5" stroke="#000" stroke-width="1" fill="none" shape-rendering="crispEdges"/></svg>
<svg class="a" style="left:354px;top:105px" width="10" height="9" viewBox="0 0 10 9"><path d="M1 1l7 7M8 1l-7 7" stroke="#000" stroke-width="1.5" fill="none"/></svg>
<div class="a" style="left:8px;top:124px;width:363px;height:26px;background:linear-gradient(#a3a3c1 0%,#8f8fb3 50%,#7878a0 100%);border-top:1px solid #7c7ca2"></div>
<div class="t" style="left:12px;top:130px;font-size:10.5px;font-weight:bold;color:#fff"><span class="c">工</span><span class="c">程</span></div>
<div class="a" style="left:7px;top:150px;width:1px;height:697px;background:#8484aa"></div>
<div class="a" style="left:8px;top:150px;width:346px;height:697px;background:#fff"></div>
<div class="a" style="left:10px;top:150px;width:360px;height:25px;background:linear-gradient(#f4f4fa 0%,#e2e2ee 40%,#c6c6db 75%,#a2a2c2 100%);border-bottom:1px solid #8f8fb2;border-radius:0 0 4px 4px"></div>
<div class="a" style="left:8px;top:150px;width:2px;height:25px;background:#d6d6e7"></div>
<div class="sep" style="left:122px;top:156px;height:15px"></div>
<svg class="a" style="left:12px;top:154px" width="18" height="16" viewBox="0 0 18 16"><path d="M1.500 4.500h9v11h-9z" fill="#fff" stroke="#2a2a2a" stroke-width="1"/><path d="M11 0.500h3v3.500h3.500v3h-3.500v3.500h-3v-3.500h-3.500v-3h3.500z" fill="#ff8a10" stroke="#d85c00" stroke-width="0.600" transform="translate(1.500 0) scale(0.850)"/></svg>
<svg class="a" style="left:35px;top:154px" width="16" height="16" viewBox="0 0 16 16"><path d="M1.500 2.500h5l2 2v7h-7z" fill="#ececf4" stroke="#b8b8cc" stroke-width="1"/><path d="M3 6h4M3 8h4" stroke="#b8b8cc" stroke-width="0.900"/><path d="M7.500 6.500h5l2.500 2.500v6.500h-7.500z" fill="#ececf4" stroke="#b8b8cc" stroke-width="1"/><path d="M9 10h4.500M9 12h4.500M9 14h4.500" stroke="#b8b8cc" stroke-width="0.900"/></svg>
<svg class="a" style="left:57px;top:154px" width="16" height="16" viewBox="0 0 16 16"><path d="M1 3.500h10v11h-10z" fill="#dcdce8" stroke="#b8b8cc" stroke-width="1.200"/><rect x="3.500" y="2" width="5" height="3" fill="#e8e8f2" stroke="#b8b8cc"/><path d="M7.500 8.500h5l2.500 2.500v4.500h-7.500z" fill="#f0f0f8" stroke="#b8b8cc" stroke-width="1"/><path d="M9 12h4.500M9 14h4.500" stroke="#b8b8cc" stroke-width="0.900"/></svg>
<svg class="a" style="left:79px;top:154px" width="16" height="16" viewBox="0 0 16 16"><path d="M1.500 0.500h5l2.500 2.500v7.500h-7.500z" fill="#fff" stroke="#3a3a3a" stroke-width="1"/><path d="M6.500 0.500v2.500h2.500" fill="none" stroke="#3a3a3a" stroke-width="0.800"/><path d="M3 3.500h2.500M3 5.500h4.500M3 7.500h3" stroke="#8a8a8a" stroke-width="0.900"/><circle cx="11.500" cy="10.300" r="4.600" fill="#1c62d4" stroke="#0c3c9c" stroke-width="0.700"/><rect x="10.700" y="9.300" width="1.700" height="3.800" fill="#fff"/><rect x="10.700" y="7" width="1.700" height="1.500" fill="#fff"/></svg>
<svg class="a" style="left:103px;top:154px" width="13" height="16" viewBox="0 0 13 16"><path d="M0.500 1.500h8l3.500 3.500v10.500h-11.500z" fill="#e8f2fc" stroke="#5878d0" stroke-width="1"/><path d="M8.500 1.500v3.500h3.500" fill="#c8dcf4" stroke="#5878d0" stroke-width="0.900"/><path d="M2.500 8.200q1.200-3.200 4.800-2.600l-0.300-1.800l3.600 2.800l-3.600 2.600l0.200-1.700q-2.400-0.300-3.100 1.900z" fill="#1daa34"/><path d="M9.800 9.800q-1.200 3.200-4.800 2.600l0.300 1.800l-3.600-2.800l3.600-2.600l-0.200 1.700q2.400 0.300 3.100-1.900z" fill="#1daa34"/></svg>
<svg class="a" style="left:129px;top:154px" width="16" height="16" viewBox="0 0 16 16"><path d="M0 9.500l3.500-2.500v-6h8v7.500z" fill="#3a3a3a"/><rect x="4.500" y="2" width="6" height="4.500" fill="#777"/><path d="M0 9.500h8" stroke="#222" stroke-width="1"/><rect x="6" y="6" width="3" height="9.500" fill="#f04848"/><rect x="9.200" y="4" width="2" height="11.500" fill="#3a3a3a"/><rect x="10.500" y="4.500" width="4.500" height="11" rx="1" fill="#e4e4e4" stroke="#4a4a4a" stroke-width="0.900"/><rect x="11.500" y="6" width="1.500" height="1.500" fill="#30c030"/><path d="M10 1v3" stroke="#222" stroke-width="1"/></svg>
<div class="arr" style="left:146px;top:161px;border-left-width:3px;border-right-width:3px;border-top-width:3px"></div>
<div class="a" style="left:354px;top:175px;width:15px;height:672px;background:#f0f0f0"></div>
<div class="a" style="left:369px;top:175px;width:1px;height:672px;background:#fff"></div>
<div class="a" style="left:354px;top:424px;width:15px;height:394px;background:#c9c9c9"></div>
<svg class="a" style="left:356px;top:180px" width="11" height="8" viewBox="0 0 11 8"><path d="M1.5 6.5l4-4 4 4" stroke="#606060" stroke-width="2" fill="none"/></svg>
<div class="a" style="left:370px;top:175px;width:1px;height:672px;background:#8c8cb0"></div>
<div class="a" style="left:371px;top:97px;width:4px;height:750px;background:#dcdceb"></div>
<div class="vd" style="left:16px;top:175px;height:672px"></div>
<div class="vd" style="left:35px;top:175px;height:671px"></div>
<div class="vd" style="left:54px;top:175px;height:410px"></div>
<div class="vd" style="left:54px;top:715px;height:90px"></div>
<div class="vd" style="left:73px;top:175px;height:351px"></div>
<div class="vd" style="left:73px;top:595px;height:91px"></div>
<div class="vd" style="left:73px;top:735px;height:31px"></div>
<div class="a" style="left:8px;top:175px;width:345px;height:672px;overflow:hidden">
</div>
<div class="hd" style="left:75px;top:185px;width:9px"></div>
<svg class="a" style="left:91px;top:182px" width="10" height="11" viewBox="0 0 10 11"><rect x="8" y="2.500" width="1" height="8.500" fill="#b4bccd"/><rect x="0" y="8.500" width="8" height="1.500" fill="#e3e7ee"/><rect x="0" y="10" width="9" height="1" fill="#a9b4cb"/><rect x="0" y="6.300" width="2" height="0.800" fill="#bdbdbd"/><rect x="5.200" y="6.300" width="2" height="0.800" fill="#bdbdbd"/><rect x="6" y="0" width="3.200" height="3" rx="1" fill="#27405f"/><rect x="7" y="1" width="1.200" height="1" fill="#fff"/><rect x="0" y="4.900" width="7.200" height="1.600" fill="#e00c0c"/><rect x="1.800" y="3" width="1.500" height="5.200" fill="#e00c0c"/><rect x="4" y="3" width="1.500" height="5.200" fill="#e00c0c"/></svg>
<div class="tr" style="left:105px;top:177px;">Port ID <span class="c">设</span><span class="c">定</span></div>
<div class="hd" style="left:75px;top:205px;width:9px"></div>
<svg class="a" style="left:91px;top:202px" width="10" height="11" viewBox="0 0 10 11"><rect x="8" y="2.500" width="1" height="8.500" fill="#b4bccd"/><rect x="0" y="8.500" width="8" height="1.500" fill="#e3e7ee"/><rect x="0" y="10" width="9" height="1" fill="#a9b4cb"/><rect x="0" y="6.300" width="2" height="0.800" fill="#bdbdbd"/><rect x="5.200" y="6.300" width="2" height="0.800" fill="#bdbdbd"/><rect x="6" y="0" width="3.200" height="3" rx="1" fill="#27405f"/><rect x="7" y="1" width="1.200" height="1" fill="#fff"/><rect x="0" y="4.900" width="7.200" height="1.600" fill="#e00c0c"/><rect x="1.800" y="3" width="1.500" height="5.200" fill="#e00c0c"/><rect x="4" y="3" width="1.500" height="5.200" fill="#e00c0c"/></svg>
<div class="tr" style="left:105px;top:197px;width:248px;overflow:hidden">Communication Status(1 CIM On,2 CIM Off</div>
<div class="hd" style="left:75px;top:225px;width:9px"></div>
<svg class="a" style="left:91px;top:222px" width="10" height="11" viewBox="0 0 10 11"><rect x="8" y="2.500" width="1" height="8.500" fill="#b4bccd"/><rect x="0" y="8.500" width="8" height="1.500" fill="#e3e7ee"/><rect x="0" y="10" width="9" height="1" fill="#a9b4cb"/><rect x="0" y="6.300" width="2" height="0.800" fill="#bdbdbd"/><rect x="5.200" y="6.300" width="2" height="0.800" fill="#bdbdbd"/><rect x="6" y="0" width="3.200" height="3" rx="1" fill="#27405f"/><rect x="7" y="1" width="1.200" height="1" fill="#fff"/><rect x="0" y="4.900" width="7.200" height="1.600" fill="#e00c0c"/><rect x="1.800" y="3" width="1.500" height="5.200" fill="#e00c0c"/><rect x="4" y="3" width="1.500" height="5.200" fill="#e00c0c"/></svg>
<div class="tr" style="left:105px;top:217px;">1 Line Out 2 Line In 3Scrap</div>
<div class="hd" style="left:75px;top:245px;width:9px"></div>
<svg class="a" style="left:91px;top:242px" width="10" height="11" viewBox="0 0 10 11"><rect x="8" y="2.500" width="1" height="8.500" fill="#b4bccd"/><rect x="0" y="8.500" width="8" height="1.500" fill="#e3e7ee"/><rect x="0" y="10" width="9" height="1" fill="#a9b4cb"/><rect x="0" y="6.300" width="2" height="0.800" fill="#bdbdbd"/><rect x="5.200" y="6.300" width="2" height="0.800" fill="#bdbdbd"/><rect x="6" y="0" width="3.200" height="3" rx="1" fill="#27405f"/><rect x="7" y="1" width="1.200" height="1" fill="#fff"/><rect x="0" y="4.900" width="7.200" height="1.600" fill="#e00c0c"/><rect x="1.800" y="3" width="1.500" height="5.200" fill="#e00c0c"/><rect x="4" y="3" width="1.500" height="5.200" fill="#e00c0c"/></svg>
<div class="tr" style="left:105px;top:237px;">Port No Choice</div>
<div class="hd" style="left:75px;top:265px;width:9px"></div>
<svg class="a" style="left:91px;top:262px" width="10" height="11" viewBox="0 0 10 11"><rect x="8" y="2.500" width="1" height="8.500" fill="#b4bccd"/><rect x="0" y="8.500" width="8" height="1.500" fill="#e3e7ee"/><rect x="0" y="10" width="9" height="1" fill="#a9b4cb"/><rect x="0" y="6.300" width="2" height="0.800" fill="#bdbdbd"/><rect x="5.200" y="6.300" width="2" height="0.800" fill="#bdbdbd"/><rect x="6" y="0" width="3.200" height="3" rx="1" fill="#27405f"/><rect x="7" y="1" width="1.200" height="1" fill="#fff"/><rect x="0" y="4.900" width="7.200" height="1.600" fill="#e00c0c"/><rect x="1.800" y="3" width="1.500" height="5.200" fill="#e00c0c"/><rect x="4" y="3" width="1.500" height="5.200" fill="#e00c0c"/></svg>
<div class="tr" style="left:105px;top:257px;">Touch<span class="c">显</span><span class="c">示</span></div>
<div class="hd" style="left:75px;top:285px;width:9px"></div>
<svg class="a" style="left:91px;top:282px" width="10" height="11" viewBox="0 0 10 11"><rect x="8" y="2.500" width="1" height="8.500" fill="#b4bccd"/><rect x="0" y="8.500" width="8" height="1.500" fill="#e3e7ee"/><rect x="0" y="10" width="9" height="1" fill="#a9b4cb"/><rect x="0" y="6.300" width="2" height="0.800" fill="#bdbdbd"/><rect x="5.200" y="6.300" width="2" height="0.800" fill="#bdbdbd"/><rect x="6" y="0" width="3.200" height="3" rx="1" fill="#27405f"/><rect x="7" y="1" width="1.200" height="1" fill="#fff"/><rect x="0" y="4.900" width="7.200" height="1.600" fill="#e00c0c"/><rect x="1.800" y="3" width="1.500" height="5.200" fill="#e00c0c"/><rect x="4" y="3" width="1.500" height="5.200" fill="#e00c0c"/></svg>
<div class="tr" style="left:105px;top:277px;">Slot No Choice</div>
<div class="hd" style="left:75px;top:305px;width:9px"></div>
<svg class="a" style="left:91px;top:302px" width="10" height="11" viewBox="0 0 10 11"><rect x="8" y="2.500" width="1" height="8.500" fill="#b4bccd"/><rect x="0" y="8.500" width="8" height="1.500" fill="#e3e7ee"/><rect x="0" y="10" width="9" height="1" fill="#a9b4cb"/><rect x="0" y="6.300" width="2" height="0.800" fill="#bdbdbd"/><rect x="5.200" y="6.300" width="2" height="0.800" fill="#bdbdbd"/><rect x="6" y="0" width="3.200" height="3" rx="1" fill="#27405f"/><rect x="7" y="1" width="1.200" height="1" fill="#fff"/><rect x="0" y="4.900" width="7.200" height="1.600" fill="#e00c0c"/><rect x="1.800" y="3" width="1.500" height="5.200" fill="#e00c0c"/><rect x="4" y="3" width="1.500" height="5.200" fill="#e00c0c"/></svg>
<div class="tr" style="left:105px;top:297px;">RemoveJob</div>
<div class="hd" style="left:75px;top:325px;width:9px"></div>
<svg class="a" style="left:91px;top:322px" width="10" height="11" viewBox="0 0 10 11"><rect x="8" y="2.500" width="1" height="8.500" fill="#b4bccd"/><rect x="0" y="8.500" width="8" height="1.500" fill="#e3e7ee"/><rect x="0" y="10" width="9" height="1" fill="#a9b4cb"/><rect x="0" y="6.300" width="2" height="0.800" fill="#bdbdbd"/><rect x="5.200" y="6.300" width="2" height="0.800" fill="#bdbdbd"/><rect x="6" y="0" width="3.200" height="3" rx="1" fill="#27405f"/><rect x="7" y="1" width="1.200" height="1" fill="#fff"/><rect x="0" y="4.900" width="7.200" height="1.600" fill="#e00c0c"/><rect x="1.800" y="3" width="1.500" height="5.200" fill="#e00c0c"/><rect x="4" y="3" width="1.500" height="5.200" fill="#e00c0c"/></svg>
<div class="tr" style="left:105px;top:317px;">CST Data <span class="c">显</span><span class="c">示</span></div>
<div class="hd" style="left:75px;top:345px;width:9px"></div>
<svg class="a" style="left:91px;top:342px" width="10" height="11" viewBox="0 0 10 11"><rect x="8" y="2.500" width="1" height="8.500" fill="#b4bccd"/><rect x="0" y="8.500" width="8" height="1.500" fill="#e3e7ee"/><rect x="0" y="10" width="9" height="1" fill="#a9b4cb"/><rect x="0" y="6.300" width="2" height="0.800" fill="#bdbdbd"/><rect x="5.200" y="6.300" width="2" height="0.800" fill="#bdbdbd"/><rect x="6" y="0" width="3.200" height="3" rx="1" fill="#27405f"/><rect x="7" y="1" width="1.200" height="1" fill="#fff"/><rect x="0" y="4.900" width="7.200" height="1.600" fill="#e00c0c"/><rect x="1.800" y="3" width="1.500" height="5.200" fill="#e00c0c"/><rect x="4" y="3" width="1.500" height="5.200" fill="#e00c0c"/></svg>
<div class="tr" style="left:105px;top:337px;">RobotDispatch</div>
<div class="hd" style="left:75px;top:365px;width:9px"></div>
<svg class="a" style="left:91px;top:362px" width="10" height="11" viewBox="0 0 10 11"><rect x="8" y="2.500" width="1" height="8.500" fill="#b4bccd"/><rect x="0" y="8.500" width="8" height="1.500" fill="#e3e7ee"/><rect x="0" y="10" width="9" height="1" fill="#a9b4cb"/><rect x="0" y="6.300" width="2" height="0.800" fill="#bdbdbd"/><rect x="5.200" y="6.300" width="2" height="0.800" fill="#bdbdbd"/><rect x="6" y="0" width="3.200" height="3" rx="1" fill="#27405f"/><rect x="7" y="1" width="1.200" height="1" fill="#fff"/><rect x="0" y="4.900" width="7.200" height="1.600" fill="#e00c0c"/><rect x="1.800" y="3" width="1.500" height="5.200" fill="#e00c0c"/><rect x="4" y="3" width="1.500" height="5.200" fill="#e00c0c"/></svg>
<div class="tr" style="left:105px;top:357px;">Port Type<span class="c">选</span><span class="c">择</span></div>
<div class="hd" style="left:75px;top:385px;width:9px"></div>
<svg class="a" style="left:91px;top:382px" width="10" height="11" viewBox="0 0 10 11"><rect x="8" y="2.500" width="1" height="8.500" fill="#b4bccd"/><rect x="0" y="8.500" width="8" height="1.500" fill="#e3e7ee"/><rect x="0" y="10" width="9" height="1" fill="#a9b4cb"/><rect x="0" y="6.300" width="2" height="0.800" fill="#bdbdbd"/><rect x="5.200" y="6.300" width="2" height="0.800" fill="#bdbdbd"/><rect x="6" y="0" width="3.200" height="3" rx="1" fill="#27405f"/><rect x="7" y="1" width="1.200" height="1" fill="#fff"/><rect x="0" y="4.900" width="7.200" height="1.600" fill="#e00c0c"/><rect x="1.800" y="3" width="1.500" height="5.200" fill="#e00c0c"/><rect x="4" y="3" width="1.500" height="5.200" fill="#e00c0c"/></svg>
<div class="tr" style="left:105px;top:377px;">PortType<span class="c">初</span><span class="c">始</span><span class="c">化</span></div>
<div class="hd" style="left:75px;top:405px;width:9px"></div>
<svg class="a" style="left:91px;top:402px" width="10" height="11" viewBox="0 0 10 11"><rect x="8" y="2.500" width="1" height="8.500" fill="#b4bccd"/><rect x="0" y="8.500" width="8" height="1.500" fill="#e3e7ee"/><rect x="0" y="10" width="9" height="1" fill="#a9b4cb"/><rect x="0" y="6.300" width="2" height="0.800" fill="#bdbdbd"/><rect x="5.200" y="6.300" width="2" height="0.800" fill="#bdbdbd"/><rect x="6" y="0" width="3.200" height="3" rx="1" fill="#27405f"/><rect x="7" y="1" width="1.200" height="1" fill="#fff"/><rect x="0" y="4.900" width="7.200" height="1.600" fill="#e00c0c"/><rect x="1.800" y="3" width="1.500" height="5.200" fill="#e00c0c"/><rect x="4" y="3" width="1.500" height="5.200" fill="#e00c0c"/></svg>
<div class="tr" style="left:105px;top:397px;">User Type Set</div>
<div class="hd" style="left:75px;top:425px;width:9px"></div>
<svg class="a" style="left:91px;top:422px" width="10" height="11" viewBox="0 0 10 11"><rect x="8" y="2.500" width="1" height="8.500" fill="#b4bccd"/><rect x="0" y="8.500" width="8" height="1.500" fill="#e3e7ee"/><rect x="0" y="10" width="9" height="1" fill="#a9b4cb"/><rect x="0" y="6.300" width="2" height="0.800" fill="#bdbdbd"/><rect x="5.200" y="6.300" width="2" height="0.800" fill="#bdbdbd"/><rect x="6" y="0" width="3.200" height="3" rx="1" fill="#27405f"/><rect x="7" y="1" width="1.200" height="1" fill="#fff"/><rect x="0" y="4.900" width="7.200" height="1.600" fill="#e00c0c"/><rect x="1.800" y="3" width="1.500" height="5.200" fill="#e00c0c"/><rect x="4" y="3" width="1.500" height="5.200" fill="#e00c0c"/></svg>
<div class="tr" style="left:105px;top:417px;">Transfer Mode Choice</div>
<div class="hd" style="left:75px;top:445px;width:9px"></div>
<svg class="a" style="left:91px;top:442px" width="10" height="11" viewBox="0 0 10 11"><rect x="8" y="2.500" width="1" height="8.500" fill="#b4bccd"/><rect x="0" y="8.500" width="8" height="1.500" fill="#e3e7ee"/><rect x="0" y="10" width="9" height="1" fill="#a9b4cb"/><rect x="0" y="6.300" width="2" height="0.800" fill="#bdbdbd"/><rect x="5.200" y="6.300" width="2" height="0.800" fill="#bdbdbd"/><rect x="6" y="0" width="3.200" height="3" rx="1" fill="#27405f"/><rect x="7" y="1" width="1.200" height="1" fill="#fff"/><rect x="0" y="4.900" width="7.200" height="1.600" fill="#e00c0c"/><rect x="1.800" y="3" width="1.500" height="5.200" fill="#e00c0c"/><rect x="4" y="3" width="1.500" height="5.200" fill="#e00c0c"/></svg>
<div class="tr" style="left:105px;top:437px;">TransferMode<span class="c">初</span><span class="c">始</span><span class="c">化</span></div>
<div class="hd" style="left:75px;top:465px;width:9px"></div>
<svg class="a" style="left:91px;top:462px" width="10" height="11" viewBox="0 0 10 11"><rect x="8" y="2.500" width="1" height="8.500" fill="#b4bccd"/><rect x="0" y="8.500" width="8" height="1.500" fill="#e3e7ee"/><rect x="0" y="10" width="9" height="1" fill="#a9b4cb"/><rect x="0" y="6.300" width="2" height="0.800" fill="#bdbdbd"/><rect x="5.200" y="6.300" width="2" height="0.800" fill="#bdbdbd"/><rect x="6" y="0" width="3.200" height="3" rx="1" fill="#27405f"/><rect x="7" y="1" width="1.200" height="1" fill="#fff"/><rect x="0" y="4.900" width="7.200" height="1.600" fill="#e00c0c"/><rect x="1.800" y="3" width="1.500" height="5.200" fill="#e00c0c"/><rect x="4" y="3" width="1.500" height="5.200" fill="#e00c0c"/></svg>
<div class="tr" style="left:105px;top:457px;">Port Enable</div>
<div class="hd" style="left:75px;top:485px;width:9px"></div>
<svg class="a" style="left:91px;top:482px" width="10" height="11" viewBox="0 0 10 11"><rect x="8" y="2.500" width="1" height="8.500" fill="#b4bccd"/><rect x="0" y="8.500" width="8" height="1.500" fill="#e3e7ee"/><rect x="0" y="10" width="9" height="1" fill="#a9b4cb"/><rect x="0" y="6.300" width="2" height="0.800" fill="#bdbdbd"/><rect x="5.200" y="6.300" width="2" height="0.800" fill="#bdbdbd"/><rect x="6" y="0" width="3.200" height="3" rx="1" fill="#27405f"/><rect x="7" y="1" width="1.200" height="1" fill="#fff"/><rect x="0" y="4.900" width="7.200" height="1.600" fill="#e00c0c"/><rect x="1.800" y="3" width="1.500" height="5.200" fill="#e00c0c"/><rect x="4" y="3" width="1.500" height="5.200" fill="#e00c0c"/></svg>
<div class="tr" style="left:105px;top:477px;"><span class="c">关</span><span class="c">闭</span><span class="c">弹</span><span class="c">窗</span></div>
<div class="hd" style="left:75px;top:505px;width:9px"></div>
<svg class="a" style="left:91px;top:502px" width="10" height="11" viewBox="0 0 10 11"><rect x="8" y="2.500" width="1" height="8.500" fill="#b4bccd"/><rect x="0" y="8.500" width="8" height="1.500" fill="#e3e7ee"/><rect x="0" y="10" width="9" height="1" fill="#a9b4cb"/><rect x="0" y="6.300" width="2" height="0.800" fill="#bdbdbd"/><rect x="5.200" y="6.300" width="2" height="0.800" fill="#bdbdbd"/><rect x="6" y="0" width="3.200" height="3" rx="1" fill="#27405f"/><rect x="7" y="1" width="1.200" height="1" fill="#fff"/><rect x="0" y="4.900" width="7.200" height="1.600" fill="#e00c0c"/><rect x="1.800" y="3" width="1.500" height="5.200" fill="#e00c0c"/><rect x="4" y="3" width="1.500" height="5.200" fill="#e00c0c"/></svg>
<div class="tr" style="left:105px;top:497px;">END</div>
<div class="hd" style="left:75px;top:525px;width:9px"></div>
<svg class="a" style="left:84px;top:517px" width="16" height="16" viewBox="0 0 16 16"><path d="M0.5 1.5l8-1 1.5 12.5-8 0.5z" fill="url(#lg)" stroke="#b9c6d8" stroke-width="0.8"/><rect x="4.5" y="6.5" width="11" height="9" fill="#fff" stroke="#3c3ce6" stroke-width="1.2"/><path d="M4.5 9.5h11M4.5 12.5h11M8.5 6.5v9" stroke="#3c3ce6" stroke-width="1.1" fill="none"/><path d="M9.5 8h5M9.5 11h5M9.5 14h5M5.5 11h2.4M5.5 14h2.4" stroke="#c9c9c9" stroke-width="1"/></svg>
<div class="tr" style="left:105px;top:517px;"><span class="c">局</span><span class="c">部</span><span class="c">标</span><span class="c">签</span></div>
<div class="hd" style="left:59px;top:545px;width:6px"></div>
<div class="ex" style="left:50px;top:541px"><i></i><b></b></div>
<svg class="a" style="left:65px;top:537px" width="17" height="16" viewBox="0 0 17 16"><path d="M0.500 6q0-2.500 2.500-2.500h2v11.500h-2.500q-2 0-2-2z" fill="#fbe7a6" stroke="#d9a12a" stroke-width="1"/><rect x="1.500" y="5" width="1.500" height="8" fill="#fff6d6"/><path d="M1.500 13.500h14v2h-12.500q-1.500 0-1.500-2z" fill="#c8921c"/><rect x="15.200" y="7" width="1.200" height="7.500" fill="#3a4a66"/><path d="M4.500 0.500h7.500l3 3v10h-10.500z" fill="url(#pg2)"/><path d="M4.500 13.500v-13h7.500" fill="none" stroke="#a9b8cf" stroke-width="1"/><path d="M12 0.500l3 3v10h-10.500" fill="none" stroke="#2a4362" stroke-width="1"/><path d="M12 0.800v2.700h2.700" fill="#eef1f6" stroke="#5a6f8c" stroke-width="0.800"/><rect x="5" y="6.200" width="3" height="1.700" fill="#e00c0c"/><rect x="9" y="6.200" width="3.400" height="1.700" fill="#e00c0c"/><rect x="6.700" y="4" width="1.300" height="6" fill="#e00c0c"/><rect x="9" y="4" width="1.400" height="6" fill="#e00c0c"/></svg>
<div class="tr" style="left:86px;top:537px;">RBStatus</div>
<div class="hd" style="left:59px;top:565px;width:6px"></div>
<div class="ex" style="left:50px;top:561px"><i></i><b></b></div>
<svg class="a" style="left:65px;top:557px" width="17" height="16" viewBox="0 0 17 16"><path d="M0.500 6q0-2.500 2.500-2.500h2v11.500h-2.500q-2 0-2-2z" fill="#fbe7a6" stroke="#d9a12a" stroke-width="1"/><rect x="1.500" y="5" width="1.500" height="8" fill="#fff6d6"/><path d="M1.500 13.500h14v2h-12.500q-1.500 0-1.500-2z" fill="#c8921c"/><rect x="15.200" y="7" width="1.200" height="7.500" fill="#3a4a66"/><path d="M4.500 0.500h7.500l3 3v10h-10.500z" fill="url(#pg2)"/><path d="M4.500 13.500v-13h7.500" fill="none" stroke="#a9b8cf" stroke-width="1"/><path d="M12 0.500l3 3v10h-10.500" fill="none" stroke="#2a4362" stroke-width="1"/><path d="M12 0.800v2.700h2.700" fill="#eef1f6" stroke="#5a6f8c" stroke-width="0.800"/><rect x="5" y="6.200" width="3" height="1.700" fill="#e00c0c"/><rect x="9" y="6.200" width="3.400" height="1.700" fill="#e00c0c"/><rect x="6.700" y="4" width="1.300" height="6" fill="#e00c0c"/><rect x="9" y="4" width="1.400" height="6" fill="#e00c0c"/></svg>
<div class="tr" style="left:86px;top:557px;"><span class="c">投</span><span class="c">入</span><span class="c">口</span>LK</div>
<div class="hd" style="left:59px;top:585px;width:6px"></div>
<div class="ex" style="left:50px;top:581px"><i></i></div>
<svg class="a" style="left:65px;top:577px" width="17" height="16" viewBox="0 0 17 16"><path d="M0.500 6q0-2.500 2.500-2.500h2v11.500h-2.500q-2 0-2-2z" fill="#fbe7a6" stroke="#d9a12a" stroke-width="1"/><rect x="1.500" y="5" width="1.500" height="8" fill="#fff6d6"/><path d="M1.500 13.500h14v2h-12.500q-1.500 0-1.500-2z" fill="#c8921c"/><rect x="15.200" y="7" width="1.200" height="7.500" fill="#3a4a66"/><path d="M4.500 0.500h7.500l3 3v10h-10.500z" fill="url(#pg2)"/><path d="M4.500 13.500v-13h7.500" fill="none" stroke="#a9b8cf" stroke-width="1"/><path d="M12 0.500l3 3v10h-10.500" fill="none" stroke="#2a4362" stroke-width="1"/><path d="M12 0.800v2.700h2.700" fill="#eef1f6" stroke="#5a6f8c" stroke-width="0.800"/><rect x="5" y="6.200" width="3" height="1.700" fill="#e00c0c"/><rect x="9" y="6.200" width="3.400" height="1.700" fill="#e00c0c"/><rect x="6.700" y="4" width="1.300" height="6" fill="#e00c0c"/><rect x="9" y="4" width="1.400" height="6" fill="#e00c0c"/></svg>
<div class="tr" style="left:86px;top:577px;"><span class="c">排</span><span class="c">出</span><span class="c">口</span>LK</div>
<div class="hd" style="left:75px;top:605px;width:10px"></div>
<svg class="a" style="left:86px;top:598px" width="13" height="16" viewBox="0 0 13 16"><path d="M0.500 0.500h8l3.500 3.500v10.800h-11.500z" fill="url(#dg)"/><path d="M0.500 14.800v-14.300h8" fill="none" stroke="#a9b8cf" stroke-width="1"/><path d="M8.500 0.500l3.500 3.500v10.800h-11.500" fill="none" stroke="#2a4362" stroke-width="1"/><path d="M8.500 0.800v3.200h3.200" fill="#eef1f6" stroke="#5a6f8c" stroke-width="0.800"/><rect x="1.200" y="7.200" width="3" height="1.700" fill="#e00c0c"/><rect x="6.100" y="7.200" width="3" height="1.700" fill="#e00c0c"/><rect x="2.800" y="5" width="1.400" height="6" fill="#e00c0c"/><rect x="6.100" y="5" width="1.400" height="6" fill="#e00c0c"/></svg>
<div class="tr" style="left:105px;top:597px;"><span class="c">程</span><span class="c">序</span><span class="c">本</span><span class="c">体</span></div>
<div class="hd" style="left:75px;top:625px;width:9px"></div>
<svg class="a" style="left:91px;top:622px" width="10" height="11" viewBox="0 0 10 11"><rect x="8" y="2.500" width="1" height="8.500" fill="#b4bccd"/><rect x="0" y="8.500" width="8" height="1.500" fill="#e3e7ee"/><rect x="0" y="10" width="9" height="1" fill="#a9b4cb"/><rect x="0" y="6.300" width="2" height="0.800" fill="#bdbdbd"/><rect x="5.200" y="6.300" width="2" height="0.800" fill="#bdbdbd"/><rect x="6" y="0" width="3.200" height="3" rx="1" fill="#27405f"/><rect x="7" y="1" width="1.200" height="1" fill="#fff"/><rect x="0" y="4.900" width="7.200" height="1.600" fill="#e00c0c"/><rect x="1.800" y="3" width="1.500" height="5.200" fill="#e00c0c"/><rect x="4" y="3" width="1.500" height="5.200" fill="#e00c0c"/></svg>
<div class="tr" style="left:105px;top:617px;">Put Normal</div>
<div class="hd" style="left:75px;top:645px;width:9px"></div>
<svg class="a" style="left:91px;top:642px" width="10" height="11" viewBox="0 0 10 11"><rect x="8" y="2.500" width="1" height="8.500" fill="#b4bccd"/><rect x="0" y="8.500" width="8" height="1.500" fill="#e3e7ee"/><rect x="0" y="10" width="9" height="1" fill="#a9b4cb"/><rect x="0" y="6.300" width="2" height="0.800" fill="#bdbdbd"/><rect x="5.200" y="6.300" width="2" height="0.800" fill="#bdbdbd"/><rect x="6" y="0" width="3.200" height="3" rx="1" fill="#27405f"/><rect x="7" y="1" width="1.200" height="1" fill="#fff"/><rect x="0" y="4.900" width="7.200" height="1.600" fill="#e00c0c"/><rect x="1.800" y="3" width="1.500" height="5.200" fill="#e00c0c"/><rect x="4" y="3" width="1.500" height="5.200" fill="#e00c0c"/></svg>
<div class="tr" style="left:105px;top:637px;">GET Normal</div>
<div class="hd" style="left:75px;top:665px;width:9px"></div>
<svg class="a" style="left:91px;top:662px" width="10" height="11" viewBox="0 0 10 11"><rect x="8" y="2.500" width="1" height="8.500" fill="#b4bccd"/><rect x="0" y="8.500" width="8" height="1.500" fill="#e3e7ee"/><rect x="0" y="10" width="9" height="1" fill="#a9b4cb"/><rect x="0" y="6.300" width="2" height="0.800" fill="#bdbdbd"/><rect x="5.200" y="6.300" width="2" height="0.800" fill="#bdbdbd"/><rect x="6" y="0" width="3.200" height="3" rx="1" fill="#27405f"/><rect x="7" y="1" width="1.200" height="1" fill="#fff"/><rect x="0" y="4.900" width="7.200" height="1.600" fill="#e00c0c"/><rect x="1.800" y="3" width="1.500" height="5.200" fill="#e00c0c"/><rect x="4" y="3" width="1.500" height="5.200" fill="#e00c0c"/></svg>
<div class="tr" style="left:105px;top:657px;">END</div>
<div class="hd" style="left:75px;top:685px;width:9px"></div>
<svg class="a" style="left:84px;top:677px" width="16" height="16" viewBox="0 0 16 16"><path d="M0.5 1.5l8-1 1.5 12.5-8 0.5z" fill="url(#lg)" stroke="#b9c6d8" stroke-width="0.8"/><rect x="4.5" y="6.5" width="11" height="9" fill="#fff" stroke="#3c3ce6" stroke-width="1.2"/><path d="M4.5 9.5h11M4.5 12.5h11M8.5 6.5v9" stroke="#3c3ce6" stroke-width="1.1" fill="none"/><path d="M9.5 8h5M9.5 11h5M9.5 14h5M5.5 11h2.4M5.5 14h2.4" stroke="#c9c9c9" stroke-width="1"/></svg>
<div class="tr" style="left:105px;top:677px;"><span class="c">局</span><span class="c">部</span><span class="c">标</span><span class="c">签</span></div>
<div class="hd" style="left:40px;top:705px;width:6px"></div>
<div class="ex" style="left:31px;top:701px"><i></i></div>
<svg class="a" style="left:46px;top:697px" width="17" height="17" viewBox="0 0 17 17"><path d="M0.500 6.500q0-2 2-2h13v10.500h-13q-2 0-2-2z" fill="#fff1b8" stroke="#d4a030" stroke-width="1"/><path d="M1 13h14.500v2.200h-12.500q-2 0-2-2z" fill="#f2c244"/><path d="M1.500 15.400h14.500" stroke="#a87818" stroke-width="1.200"/><path d="M16 5v10.500" stroke="#a87818" stroke-width="0.800"/><path d="M2 4q0-2 2-2h8.500q2 0 2.200 1.600h-2v2h-7.500v3.400h-3.200z" fill="url(#bb2)"/><rect x="2.500" y="9.700" width="3" height="1.100" fill="#9adc94"/><rect x="2.500" y="12" width="3" height="1.100" fill="#9adc94"/><rect x="4.900" y="6.300" width="9.400" height="7.300" fill="url(#gb2)"/><rect x="14.300" y="7" width="2" height="1.500" fill="#2f8f30"/></svg>
<div class="tr" style="left:67px;top:697px;">FB<span class="c">管</span><span class="c">理</span></div>
<div class="hd" style="left:59px;top:725px;width:6px"></div>
<div class="ex" style="left:50px;top:721px"><i></i></div>
<svg class="a" style="left:65px;top:719px" width="17" height="15" viewBox="0 0 17 15"><path d="M0.500 3.500q0-2.500 2.500-2.500h2.500q1.500 0 1.800 2h8.200v10h-13q-2 0-2-2z" fill="#fff1b8" stroke="#d4a030" stroke-width="1"/><path d="M1 10.500h14.500v2.500h-12.500q-2 0-2-2z" fill="#f2c244"/><path d="M1.500 13.300h14.500" stroke="#a87818" stroke-width="1.200"/><path d="M16 4v9.500" stroke="#a87818" stroke-width="0.800"/><rect x="3" y="5" width="3" height="1.200" fill="#9adc94"/><rect x="3" y="8" width="3" height="1.200" fill="#9adc94"/><rect x="5.400" y="3.200" width="8" height="6.800" fill="url(#gb)"/><rect x="13.400" y="4" width="2.600" height="1.500" fill="#2f8f30"/></svg>
<div class="tr" style="left:86px;top:717px;">DateTimeSet</div>
<div class="a" style="left:103px;top:736px;width:52px;height:19px;background:#ebebeb"></div>
<div class="hd" style="left:75px;top:745px;width:10px"></div>
<svg class="a" style="left:86px;top:738px" width="13" height="16" viewBox="0 0 13 16"><path d="M0.500 0.500h8l3.500 3.500v10.800h-11.500z" fill="url(#dg)"/><path d="M0.500 14.800v-14.300h8" fill="none" stroke="#a9b8cf" stroke-width="1"/><path d="M8.500 0.500l3.500 3.500v10.800h-11.500" fill="none" stroke="#2a4362" stroke-width="1"/><path d="M8.500 0.800v3.200h3.200" fill="#eef1f6" stroke="#5a6f8c" stroke-width="0.800"/><rect x="1.200" y="7.200" width="3" height="1.700" fill="#e00c0c"/><rect x="6.100" y="7.200" width="3" height="1.700" fill="#e00c0c"/><rect x="2.800" y="5" width="1.400" height="6" fill="#e00c0c"/><rect x="6.100" y="5" width="1.400" height="6" fill="#e00c0c"/></svg>
<div class="tr" style="left:105px;top:737px;"><span class="c">程</span><span class="c">序</span><span class="c">本</span><span class="c">体</span></div>
<div class="hd" style="left:75px;top:765px;width:9px"></div>
<svg class="a" style="left:84px;top:757px" width="16" height="16" viewBox="0 0 16 16"><path d="M0.5 1.5l8-1 1.5 12.5-8 0.5z" fill="url(#lg)" stroke="#b9c6d8" stroke-width="0.8"/><rect x="4.5" y="6.5" width="11" height="9" fill="#fff" stroke="#3c3ce6" stroke-width="1.2"/><path d="M4.5 9.5h11M4.5 12.5h11M8.5 6.5v9" stroke="#3c3ce6" stroke-width="1.1" fill="none"/><path d="M9.5 8h5M9.5 11h5M9.5 14h5M5.5 11h2.4M5.5 14h2.4" stroke="#c9c9c9" stroke-width="1"/></svg>
<div class="tr" style="left:105px;top:757px;"><span class="c">局</span><span class="c">部</span><span class="c">标</span><span class="c">签</span></div>
<div class="hd" style="left:59px;top:785px;width:6px"></div>
<div class="ex" style="left:50px;top:781px"><i></i><b></b></div>
<svg class="a" style="left:65px;top:779px" width="17" height="15" viewBox="0 0 17 15"><path d="M0.500 3.500q0-2.500 2.500-2.500h2.500q1.500 0 1.800 2h8.200v10h-13q-2 0-2-2z" fill="#fff1b8" stroke="#d4a030" stroke-width="1"/><path d="M1 10.500h14.500v2.500h-12.500q-2 0-2-2z" fill="#f2c244"/><path d="M1.500 13.300h14.500" stroke="#a87818" stroke-width="1.200"/><path d="M16 4v9.500" stroke="#a87818" stroke-width="0.800"/><rect x="3" y="5" width="3" height="1.200" fill="#9adc94"/><rect x="3" y="8" width="3" height="1.200" fill="#9adc94"/><rect x="5.400" y="3.200" width="8" height="6.800" fill="url(#gb)"/><rect x="13.400" y="4" width="2.600" height="1.500" fill="#2f8f30"/></svg>
<div class="tr" style="left:86px;top:777px;">EQtoLC</div>
<div class="hd" style="left:59px;top:805px;width:6px"></div>
<div class="ex" style="left:50px;top:801px"><i></i><b></b></div>
<svg class="a" style="left:65px;top:799px" width="17" height="15" viewBox="0 0 17 15"><path d="M0.500 3.500q0-2.500 2.500-2.500h2.500q1.500 0 1.800 2h8.200v10h-13q-2 0-2-2z" fill="#fff1b8" stroke="#d4a030" stroke-width="1"/><path d="M1 10.500h14.500v2.500h-12.500q-2 0-2-2z" fill="#f2c244"/><path d="M1.500 13.300h14.500" stroke="#a87818" stroke-width="1.200"/><path d="M16 4v9.500" stroke="#a87818" stroke-width="0.800"/><rect x="3" y="5" width="3" height="1.200" fill="#9adc94"/><rect x="3" y="8" width="3" height="1.200" fill="#9adc94"/><rect x="5.400" y="3.200" width="8" height="6.800" fill="url(#gb)"/><rect x="13.400" y="4" width="2.600" height="1.500" fill="#2f8f30"/></svg>
<div class="tr" style="left:86px;top:797px;">LCtoEQ</div>
<div class="hd" style="left:40px;top:825px;width:6px"></div>
<div class="ex" style="left:31px;top:821px"><i></i><b></b></div>
<svg class="a" style="left:46px;top:818px" width="16" height="14" viewBox="0 0 16 14"><path d="M0.5 3.5q0-3 3-3h3v13h-3q-3 0-3-3z" fill="#fbe59a" stroke="#c48e1e" stroke-width="1"/><path d="M2 12.5h13v1.2h-11.5z" fill="#b8780c"/><rect x="7.5" y="0.5" width="6" height="3.2" fill="#d8365f"/><rect x="7.5" y="4.7" width="6" height="3.2" fill="#45c23f"/><rect x="7.5" y="8.9" width="6" height="3.2" fill="#e8d83a"/><path d="M4.5 2v9.5M4.5 2h3M4.5 6.3h3M4.5 10.5h3M13.5 2h2M13.5 6.3h2M13.5 10.5h2" stroke="#000" stroke-width="1.6" fill="none"/></svg>
<div class="tr" style="left:67px;top:817px;"><span class="c">结</span><span class="c">构</span><span class="c">体</span></div>
<div class="hd" style="left:36px;top:845px;width:10px"></div>
<svg class="a" style="left:46px;top:836px" width="16" height="16" viewBox="0 0 16 16"><path d="M0.5 10q0-2.5 2.5-2.5h1v8h-3.5z" fill="#fbe59a" stroke="#c48e1e" stroke-width="1"/><path d="M3.5 0.5h6l4.5 4.5v11h-10.5z" fill="#eef1f6" stroke="#8d97ab" stroke-width="1"/><path d="M5.5 1.5v14M7.5 1.5v14" stroke="#b8c2d4" stroke-width="1"/><path d="M9.5 0.5v4.5h4.5" fill="#dfe3ec" stroke="#8d97ab"/><rect x="4" y="12.5" width="11" height="3.5" fill="#f7e7a8"/></svg>
<div class="tr" style="left:67px;top:837px;"><span class="c">局</span><span class="c">部</span><span class="c">软</span><span class="c">元</span><span class="c">件</span><span class="c">注</span><span class="c">释</span></div>
<div class="a" style="left:375px;top:97px;width:509px;height:25px;background:linear-gradient(#fbfbfe,#e3e3ef)"></div>
<svg class="a" style="left:375px;top:97px" width="509" height="26" viewBox="375 97 509 26"><path d="M379.5 122.5L399.5 102.5Q401.5 100.5 404 100.5H596Q599.5 100.5 599.5 104V122.5" fill="url(#tbg)" stroke="#2453b8" stroke-width="1"/><path d="M600.5 122.5V104.5L604.5 100.5H817Q820.5 100.5 820.5 103.5L802 122.5" fill="url(#tbg)" stroke="#2453b8" stroke-width="1"/><path d="M801.5 123L820.5 103Q823 100.5 826 100.5H884V123z" fill="url(#tor)" stroke="none"/><path d="M801.5 122.5L820.5 103Q823 100.5 826 100.5H884" fill="none" stroke="#2453b8" stroke-width="1"/></svg>
<svg class="a" style="left:408px;top:105px" width="13" height="16" viewBox="0 0 13 16"><path d="M0.500 0.500h7.500l3.500 3.500v10.500h-11z" fill="url(#tg)"/><path d="M0.500 14.500v-14h7.500" fill="none" stroke="#a9b8cf" stroke-width="1"/><path d="M8 0.500l3.500 3.500v10.500h-11" fill="none" stroke="#2a4362" stroke-width="1"/><path d="M8 0.800v3.200h3.200" fill="#eef1f6" stroke="#5a6f8c" stroke-width="0.800"/><rect x="1.200" y="7.200" width="3" height="1.700" fill="#e00c0c"/><rect x="6" y="7.200" width="3" height="1.700" fill="#e00c0c"/><rect x="2.800" y="5" width="1.400" height="6" fill="#e00c0c"/><rect x="6" y="5" width="1.400" height="6" fill="#e00c0c"/></svg>
<svg class="a" style="left:610px;top:105px" width="13" height="16" viewBox="0 0 13 16"><path d="M0.500 0.500h7.500l3.500 3.500v10.500h-11z" fill="url(#tg)"/><path d="M0.500 14.500v-14h7.500" fill="none" stroke="#a9b8cf" stroke-width="1"/><path d="M8 0.500l3.500 3.500v10.500h-11" fill="none" stroke="#2a4362" stroke-width="1"/><path d="M8 0.800v3.200h3.200" fill="#eef1f6" stroke="#5a6f8c" stroke-width="0.800"/><rect x="1.200" y="7.200" width="3" height="1.700" fill="#e00c0c"/><rect x="6" y="7.200" width="3" height="1.700" fill="#e00c0c"/><rect x="2.800" y="5" width="1.400" height="6" fill="#e00c0c"/><rect x="6" y="5" width="1.400" height="6" fill="#e00c0c"/></svg>
<svg class="a" style="left:830px;top:105px" width="13" height="16" viewBox="0 0 13 16"><path d="M0.500 0.500h7.500l3.500 3.500v10.500h-11z" fill="url(#tg)"/><path d="M0.500 14.500v-14h7.500" fill="none" stroke="#a9b8cf" stroke-width="1"/><path d="M8 0.500l3.500 3.500v10.500h-11" fill="none" stroke="#2a4362" stroke-width="1"/><path d="M8 0.800v3.200h3.200" fill="#eef1f6" stroke="#5a6f8c" stroke-width="0.800"/><rect x="1.200" y="7.200" width="3" height="1.700" fill="#e00c0c"/><rect x="6" y="7.200" width="3" height="1.700" fill="#e00c0c"/><rect x="2.800" y="5" width="1.400" height="6" fill="#e00c0c"/><rect x="6" y="5" width="1.400" height="6" fill="#e00c0c"/></svg>
<div class="t" style="left:426px;top:105px;font-size:12px;letter-spacing:-0.3px;">[PRG]R</div>
<div class="t" style="left:469px;top:105px;font-size:12px;letter-spacing:0px;"><span class="c">写</span><span class="c">入</span></div>
<div class="t" style="left:497px;top:105px;font-size:12px;letter-spacing:0px;"><span class="c">排</span><span class="c">出</span><span class="c">口</span></div>
<div class="t" style="left:533.5px;top:105px;font-size:12px;letter-spacing:-0.3px;">LK</div>
<div class="t" style="left:552px;top:105px;font-size:12px;letter-spacing:-0.3px;">1081</div>
<div class="t" style="left:577px;top:105px;font-size:12px;letter-spacing:0px;"><span class="c">步</span></div>
<div class="t" style="left:627.5px;top:105px;font-size:12px;letter-spacing:-0.3px;">[PRG]</div>
<div class="t" style="left:658.7px;top:105px;font-size:12px;letter-spacing:0px;"><span class="c">读</span><span class="c">取</span></div>
<div class="t" style="left:688px;top:105px;font-size:12px;letter-spacing:-0.3px;">M_TOUCH</div>
<div class="t" style="left:752px;top:105px;font-size:12px;letter-spacing:0px;">(<span class="c">只</span><span class="c">读</span>)</div>
<div class="t" style="left:787px;top:105px;font-size:12px;letter-spacing:-0.3px;">15..</div>
<div class="t" style="left:848px;top:105px;font-size:12px;letter-spacing:-0.4px;font-weight:bold;-webkit-text-stroke:0.25px #000">[FB]</div>
<div class="t" style="left:872px;top:105px;font-size:12px;letter-spacing:0px;font-weight:bold"><span class="c">读</span><span class="c">取</span></div>
<div class="a" style="left:375px;top:122px;width:509px;height:717px;background:#2a55b0"></div>
<div class="a" style="left:376px;top:123px;width:508px;height:715px;background:#ffc477"></div>
<div class="a" style="left:802px;top:122px;width:82px;height:1px;background:#ffc477"></div>
<div class="a" style="left:378px;top:125px;width:506px;height:712px;background:#fff"></div>
<div class="a" style="left:378px;top:125px;width:1px;height:711px;background:#6e6e6e"></div>
<div class="a" style="left:378px;top:125px;width:506px;height:1px;background:#6e6e6e"></div>
<div class="a" style="left:379px;top:835px;width:505px;height:1px;background:#e2e2e2"></div>
<div class="a" style="left:371px;top:839px;width:513px;height:8px;background:#dcdceb"></div>
<div class="a" style="left:376px;top:843px;width:508px;height:4px;background:#f3f3fa;border-radius:3px 0 0 0"></div>
<div class="a" style="left:504px;top:126px;width:1px;height:142px;background:#ffff40"></div>
<div class="a" style="left:504px;top:268px;width:1px;height:567px;background:#000"></div>
<div class="a" style="left:505px;top:126px;width:153px;height:142px;background:#0000a0"></div>
<div class="a" style="left:505px;top:126px;width:1px;height:141px;background:#fff"></div>
<div class="a" style="left:505px;top:126px;width:152px;height:1px;background:#fff"></div>
<div class="a" style="left:656px;top:126px;width:1px;height:141px;background:#fff"></div>
<div class="a" style="left:505px;top:266px;width:152px;height:1px;background:#fff"></div>
<div class="a" style="left:658px;top:157px;width:1px;height:426px;background:#000"></div>
<div class="a" style="left:658px;top:582px;width:226px;height:1px;background:#000"></div>
<div class="a" style="left:505px;top:157px;width:33px;height:1px;background:#ffff30"></div>
<div class="a" style="left:537px;top:148px;width:1px;height:19px;background:#ffff30"></div>
<div class="a" style="left:548px;top:148px;width:1px;height:19px;background:#ffff30"></div>
<div class="a" style="left:548px;top:157px;width:109px;height:1px;background:#ffff30"></div>
<div class="a" style="left:504px;top:157px;width:2px;height:1px;background:#000"></div>
<div class="ld" style="left:506.5px;top:129px;color:#00e8a0;letter-spacing:0.18px;">DateTimeSet_B</div>
<div class="ld" style="left:509.5px;top:167px;color:#ff8060;letter-spacing:0.5px;"><span class="c">设</span><span class="c">定</span><span class="c">时</span><span class="c">间</span></div>
<div class="ld" style="left:509.5px;top:186px;color:#ff8060;letter-spacing:0.5px;"><span class="c">启</span><span class="c">动</span></div>
<div class="ld" style="left:420px;width:78px;top:148px;text-align:right;white-space:pre;letter-spacing:0.3px">(    0)</div>
<div class="a" style="left:658px;top:157px;width:3px;height:1px;background:#000"></div>
<div class="a" style="left:661px;top:148px;width:1px;height:19px;background:#000"></div>
<div class="a" style="left:661px;top:148px;width:4px;height:1px;background:#000"></div>
<div class="a" style="left:661px;top:166px;width:4px;height:1px;background:#000"></div>
<div class="ld" style="left:668px;top:148px;color:#000;letter-spacing:0px;">=</div>
<div class="ld" style="left:734.2px;top:149px;color:#ff00ff;letter-spacing:0.32px;">FormatSet</div>
<div class="ld" style="left:738.85px;top:168.2px;color:#008000;letter-spacing:0.42px;">FormatSe</div>
<div class="ld" style="left:738.85px;top:188.2px;color:#008000;letter-spacing:0.5px;">t(1BCD,2</div>
<div class="ld" style="left:738.85px;top:207.4px;color:#008000;letter-spacing:0.4px;">String)</div>
<div class="a" style="left:658px;top:299px;width:3px;height:1px;background:#000"></div>
<div class="a" style="left:661px;top:290px;width:1px;height:19px;background:#000"></div>
<div class="a" style="left:661px;top:290px;width:4px;height:1px;background:#000"></div>
<div class="a" style="left:661px;top:308px;width:4px;height:1px;background:#000"></div>
<div class="ld" style="left:668px;top:289px;color:#000;letter-spacing:0px;">=</div>
<div class="ld" style="left:734.2px;top:290px;color:#ff00ff;letter-spacing:0.32px;">FormatSet</div>
<div class="ld" style="left:738.85px;top:309.2px;color:#008000;letter-spacing:0.42px;">FormatSe</div>
<div class="ld" style="left:738.85px;top:329.2px;color:#008000;letter-spacing:0.5px;">t(1BCD,2</div>
<div class="ld" style="left:738.85px;top:348.4px;color:#008000;letter-spacing:0.4px;">String)</div>
<div class="a" style="left:658px;top:441px;width:3px;height:1px;background:#000"></div>
<div class="a" style="left:661px;top:432px;width:1px;height:19px;background:#000"></div>
<div class="a" style="left:661px;top:432px;width:4px;height:1px;background:#000"></div>
<div class="a" style="left:661px;top:450px;width:4px;height:1px;background:#000"></div>
<div class="ld" style="left:668px;top:431px;color:#000;letter-spacing:0px;">=</div>
<div class="ld" style="left:734.2px;top:432px;color:#ff00ff;letter-spacing:0.32px;">FormatSet</div>
<div class="ld" style="left:738.85px;top:451.2px;color:#008000;letter-spacing:0.42px;">FormatSe</div>
<div class="ld" style="left:738.85px;top:471.2px;color:#008000;letter-spacing:0.5px;">t(1BCD,2</div>
<div class="ld" style="left:738.85px;top:490.4px;color:#008000;letter-spacing:0.4px;">String)</div>
<div class="a" style="left:505px;top:724px;width:33px;height:1px;background:#000"></div>
<div class="a" style="left:537px;top:714px;width:1px;height:20px;background:#000"></div>
<div class="a" style="left:548px;top:714px;width:1px;height:20px;background:#000"></div>
<div class="a" style="left:548px;top:724px;width:113px;height:1px;background:#000"></div>
<div class="a" style="left:661px;top:715px;width:1px;height:19px;background:#000"></div>
<div class="a" style="left:661px;top:715px;width:4px;height:1px;background:#000"></div>
<div class="a" style="left:661px;top:733px;width:4px;height:1px;background:#000"></div>
<div class="ld" style="left:668px;top:714px;color:#000;letter-spacing:0px;">=</div>
<div class="ld" style="left:734.2px;top:715px;color:#ff00ff;letter-spacing:0.32px;">FormatSet</div>
<div class="ld" style="left:738.85px;top:734.2px;color:#008000;letter-spacing:0.42px;">FormatSe</div>
<div class="ld" style="left:738.85px;top:754.2px;color:#008000;letter-spacing:0.5px;">t(1BCD,2</div>
<div class="ld" style="left:738.85px;top:773.4px;color:#008000;letter-spacing:0.4px;">String)</div>
<div class="ld" style="left:506.5px;top:696px;color:#ff00ff;letter-spacing:0.18px;">DateTimeSet_B</div>
<div class="ld" style="left:510px;top:733px;color:#008000;letter-spacing:0.5px;"><span class="c">设</span><span class="c">定</span><span class="c">时</span><span class="c">间</span></div>
<div class="ld" style="left:510px;top:752px;color:#008000;letter-spacing:0.5px;"><span class="c">启</span><span class="c">动</span></div>
<div class="ld" style="left:420px;width:78px;top:715px;text-align:right;white-space:pre;letter-spacing:0.3px">(   29)</div>
<svg class="a" style="left:0;top:0;pointer-events:none" width="884" height="847" viewBox="0 0 884 847"><polygon points="531.0,315.0 358.5,579.5 356.0,576.2 353.0,595.6 369.3,584.6 365.2,583.8" fill="#3b5bdb"/><polygon points="413.8,580.2 152.2,734.7 152.0,731.4 143.3,744.8 159.2,743.2 156.4,741.5" fill="#3b5bdb"/></svg>

</body></html>
